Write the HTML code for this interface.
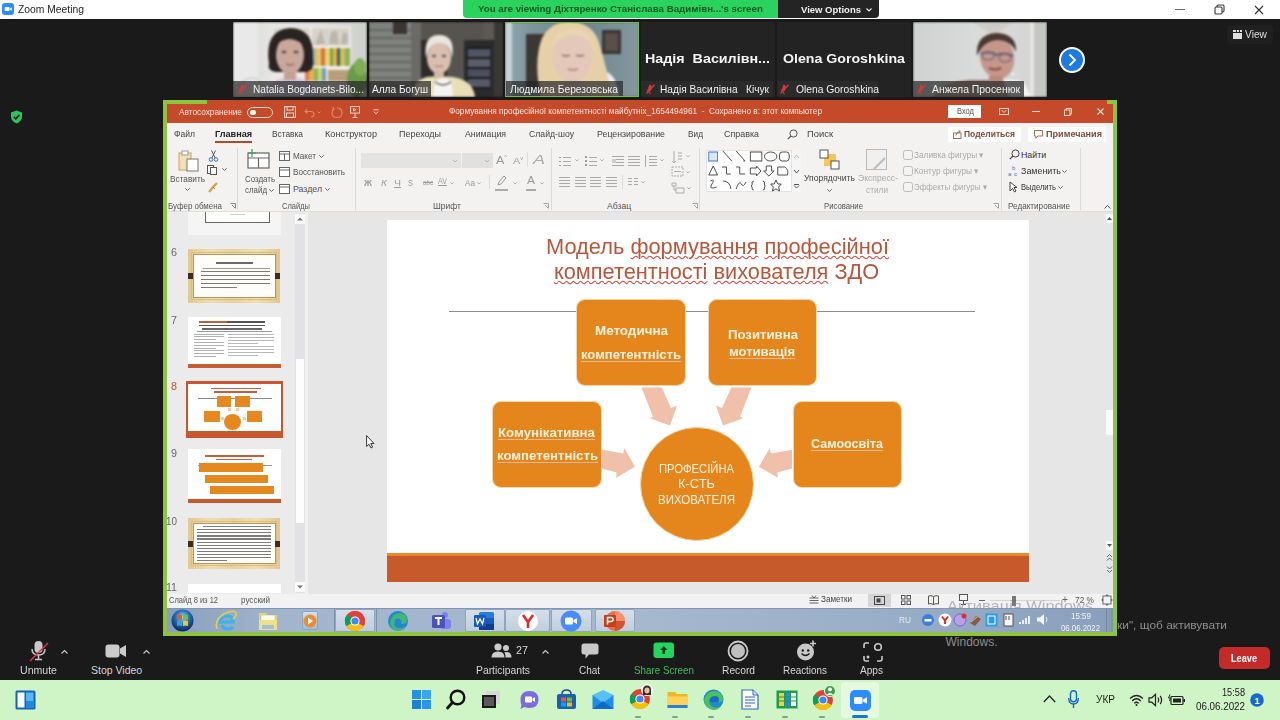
<!DOCTYPE html>
<html><head><meta charset="utf-8">
<style>
*{margin:0;padding:0;box-sizing:border-box}
html,body{width:1280px;height:720px;overflow:hidden;background:#1a1a1a;font-family:"Liberation Sans",sans-serif}
.a{position:absolute}
.t{position:absolute;white-space:nowrap;line-height:1;transform-origin:0 50%}
svg{position:absolute;overflow:visible}
</style></head><body>
<div class="a" style="left:0px;top:0px;width:1280px;height:19px;background:#fff;"></div>
<div class="a" style="left:163px;top:100px;width:954px;height:536px;background:#8ec43f;"></div>
<div class="a" style="left:207px;top:100px;width:900px;height:4px;background:#c44a2a;"></div>
<div class="a" style="left:167px;top:104px;width:946px;height:19px;background:#c44a2a;"></div>
<div class="a" style="left:167px;top:123px;width:946px;height:89px;background:#f3f2f1;"></div>
<div class="a" style="left:167px;top:211px;width:946px;height:1px;background:#dedddc;"></div>
<div class="a" style="left:167px;top:212px;width:141px;height:382px;background:#ebebeb;"></div>
<div class="a" style="left:308px;top:212px;width:805px;height:382px;background:#e6e6e6;"></div>
<div class="a" style="left:167px;top:594px;width:946px;height:14px;background:#f2f2f2;"></div>
<div class="a" style="left:167px;top:608px;width:946px;height:24px;background:linear-gradient(90deg,#889fbd 0%,#a2b5cc 12%,#a6b8ce 50%,#9aaec7 75%,#8a9fbb 100%);"></div>
<div class="a" style="left:0px;top:636px;width:1280px;height:44px;background:#1a1a1a;"></div>
<div class="a" style="left:0px;top:680px;width:1280px;height:40px;background:#cff4c5;"></div>
<div class="a" style="left:2px;top:3px;width:12px;height:12px;background:#2d8cff;border-radius:3px"></div>
<svg style="left:2px;top:3px" width="12" height="12" viewBox="0 0 12 12"><rect x="2.6" y="4" width="4.8" height="4" rx="0.8" fill="#fff"/><path d="M7.8 5.4 L9.8 4.2 V7.8 L7.8 6.6Z" fill="#fff"/></svg>
<div class="t" style="left:18px;top:4.1px;font-size:10.8px;color:#1f1f1f;font-weight:normal;transform:scaleX(0.956);">Zoom Meeting</div>
<div class="a" style="left:1175px;top:9px;width:10px;height:1px;background:#666;"></div>
<svg style="left:1214px;top:4px" width="11" height="11" viewBox="0 0 11 11"><rect x="1" y="3" width="7" height="7" rx="1.2" fill="none" stroke="#333" stroke-width="1.1"/><path d="M3 3 V2.2 Q3 1 4.2 1 H8.8 Q10 1 10 2.2 V6.8 Q10 8 8.8 8 H8" fill="none" stroke="#333" stroke-width="1.1"/></svg>
<svg style="left:1254px;top:5px" width="10" height="10" viewBox="0 0 10 10"><path d="M1 1 L9 9 M9 1 L1 9" stroke="#333" stroke-width="1.1"/></svg>
<div class="a" style="left:463px;top:0px;width:320px;height:17.5px;background:#2ad25e;border-radius:0 0 0 4px"></div>
<div class="t" style="left:478px;top:4.1px;font-size:9.8px;color:#0d5a20;font-weight:bold;transform:scaleX(0.992);">You are viewing Діхтяренко Станіслава Вадимівн...'s screen</div>
<div class="a" style="left:778px;top:0px;width:101px;height:17.5px;background:#242424;border-radius:0 0 4px 0"></div>
<div class="t" style="left:801px;top:4.6px;font-size:9.8px;color:#f0f0f0;font-weight:bold;transform:scaleX(0.969);">View Options</div>
<svg style="left:866px;top:8px" width="6" height="4" viewBox="0 0 6 4"><path d="M0.5 0.5 L3 3 L5.5 0.5" fill="none" stroke="#eee" stroke-width="1.1"/></svg>
<div class="a" style="left:1227px;top:25px;width:46px;height:19px;background:#202020;border-radius:4px"></div>
<div class="a" style="left:1233px;top:30px;width:9px;height:9px;background:#dedede;"></div>
<div class="a" style="left:1233px;top:31.5px;width:9px;height:1px;background:#202020;"></div>
<div class="a" style="left:1235.5px;top:30px;width:1px;height:1.5px;background:#202020;"></div>
<div class="a" style="left:1238.5px;top:30px;width:1px;height:1.5px;background:#202020;"></div>
<div class="t" style="left:1245px;top:29.2px;font-size:10.5px;color:#dcdcdc;font-weight:normal;transform:scaleX(0.974);">View</div>
<svg style="left:10px;top:110px" width="13" height="14" viewBox="0 0 13 14"><path d="M6.5 0.5 L12 2.5 V6.5 Q12 11 6.5 13.5 Q1 11 1 6.5 V2.5Z" fill="#2bc456"/><path d="M3.8 6.8 L5.8 8.8 L9.3 5" fill="none" stroke="#1a1a1a" stroke-width="1.5"/></svg>
<div class="a" style="left:233px;top:22px;width:134px;height:75px;overflow:hidden"><svg style="left:0;top:0;filter:blur(0.9px)" width="134" height="75" viewBox="0 0 134 75"><defs><linearGradient id="bg1" x1="0" x2="1"><stop offset="0" stop-color="#d5d6d4"/><stop offset=".3" stop-color="#e6e6e4"/><stop offset=".7" stop-color="#dcdcd9"/><stop offset="1" stop-color="#cdd0cb"/></linearGradient></defs>
<rect width="134" height="75" fill="url(#bg1)"/>
<rect x="0" y="0" width="25" height="75" fill="#e8e9e8"/>
<rect x="39" y="4" width="79" height="55" fill="#ebe8e1"/>
<rect x="41" y="6" width="36" height="18" fill="#d9d7d2"/><rect x="79" y="6" width="37" height="18" fill="#d6d3cc"/>
<path d="M82 22 L88 8 L92 22 M96 22 L98 10 L104 9 L106 22 M108 22 L110 10 L115 12 L114 22" fill="#bdb6aa"/>
<rect x="39" y="24" width="79" height="2" fill="#f4f2ee"/>
<rect x="79" y="26" width="4" height="18" fill="#9fb4b0"/><rect x="83" y="26" width="5" height="18" fill="#e9c65a"/><rect x="88" y="26" width="4" height="18" fill="#d0744f"/><rect x="92" y="26" width="5" height="18" fill="#e8d46a"/><rect x="97" y="26" width="3" height="18" fill="#7aa14e"/><rect x="100" y="26" width="4" height="18" fill="#ddb64b"/><rect x="104" y="26" width="3" height="18" fill="#4e5a58"/><rect x="107" y="26" width="5" height="18" fill="#c9c35a"/><rect x="112" y="26" width="5" height="18" fill="#8db25a"/>
<rect x="39" y="44" width="79" height="2" fill="#f4f2ee"/>
<rect x="72" y="46" width="4" height="13" fill="#e07a55"/><rect x="76" y="46" width="5" height="13" fill="#e6b24a"/><rect x="81" y="46" width="4" height="13" fill="#86b85e"/><rect x="85" y="46" width="4" height="13" fill="#d9d16a"/><rect x="89" y="46" width="4" height="13" fill="#6aa0c0"/><rect x="95" y="48" width="22" height="11" fill="#b89e78"/>
<ellipse cx="124" cy="58" rx="10" ry="17" fill="#6b9a48"/><ellipse cx="127" cy="45" rx="6" ry="9" fill="#7fae56"/>
<path d="M2 75 Q6 56 20 56 Q32 58 30 75Z" fill="none" stroke="#cfd1d1" stroke-width="1.5"/>
<path d="M30 75 Q36 56 58 55 Q80 56 88 75Z" fill="#cec7dc"/>
<path d="M36 42 Q31 8 57 6 Q81 6 80 36 Q82 48 74 50 L42 50 Q34 48 36 42Z" fill="#2a2321"/>
<ellipse cx="57" cy="33" rx="14" ry="19" fill="#c9a79b"/>
<path d="M43 22 Q47 11 58 11 Q70 11 72 24 Q64 17 56 17 Q48 18 43 22Z" fill="#2a2321"/>
<rect x="51" y="50" width="12" height="8" fill="#c4a194"/><ellipse cx="51" cy="30" rx="2.5" ry="1.3" fill="#5a4440"/><ellipse cx="63" cy="30" rx="2.5" ry="1.3" fill="#5a4440"/><path d="M53 42 Q57 44 61 42" stroke="#9a6a64" stroke-width="1.4" fill="none"/></svg></div>
<div class="a" style="left:233px;top:81px;width:134px;height:16px;background:rgba(35,35,35,0.7);"></div>
<svg style="left:238px;top:84px" width="9" height="11" viewBox="0 0 9 11"><path d="M3.2 0.8 Q5 0.2 5.6 2 L5.2 6 Q4.6 7.6 3 7.2 Q1.6 6.6 2 5Z" fill="#d23a3a"/><path d="M0.5 9.5 L8.5 0.8" stroke="#d23a3a" stroke-width="1.3"/><path d="M1.2 5.5 Q1.5 8.5 4 8.7 M4 8.7 V10.5" fill="none" stroke="#d23a3a" stroke-width="1"/></svg>
<div class="t" style="left:253px;top:83.8px;font-size:10.5px;color:#f2f2f2;font-weight:normal;transform:scaleX(0.960);">Natalia Bogdanets-Bilo...</div>
<div class="a" style="left:369px;top:22px;width:134px;height:75px;overflow:hidden"><svg style="left:0;top:0;filter:blur(0.9px)" width="134" height="75" viewBox="0 0 134 75"><rect width="134" height="75" fill="#5a5955"/>
<rect x="0" y="0" width="42" height="75" fill="#7f817d"/>
<path d="M0 8 H42 M0 16 H42 M0 24 H42 M0 32 H42 M0 40 H42 M0 48 H42 M0 56 H42 M0 64 H42 M0 72 H42" stroke="#5e605c" stroke-width="1.4"/>
<rect x="42" y="0" width="10" height="75" fill="#6b6a66"/>
<rect x="52" y="0" width="62" height="75" fill="#56544f"/>
<rect x="24" y="0" width="14" height="12" fill="#3b3530"/>
<rect x="52" y="18" width="26" height="40" fill="#2f2b27"/>
<rect x="95" y="18" width="30" height="57" fill="#2b2b2c"/>
<path d="M98 26 H122 M98 36 H122 M98 46 H122 M98 56 H122 M98 66 H122" stroke="#1a1a1a" stroke-width="2"/>
<rect x="99" y="27" width="22" height="8" fill="#62667a" opacity=".7"/><rect x="99" y="37" width="22" height="8" fill="#707488" opacity=".7"/><rect x="99" y="47" width="22" height="8" fill="#5a5e70" opacity=".7"/><rect x="99" y="57" width="22" height="8" fill="#6a6e80" opacity=".7"/>
<rect x="125" y="0" width="9" height="75" fill="#3a3835"/>
<path d="M43 75 Q44 58 58 55 L70 54 L84 55 Q104 58 106 75Z" fill="#e6dfb8"/>
<path d="M64 75 Q64 56 74 56 Q84 56 84 75Z" fill="#f4f4f1"/>
<path d="M66 60 Q74 66 82 60" fill="none" stroke="#222" stroke-width="1"/>
<ellipse cx="70" cy="36" rx="12" ry="16" fill="#d8bfb0"/>
<path d="M57 36 Q54 13 70 13 Q87 13 83 36 Q81 21 70 21 Q60 21 57 36Z" fill="#e9e5e0"/>
<rect x="65" y="49" width="10" height="7" fill="#d3b7a6"/><ellipse cx="65" cy="34" rx="2.2" ry="1.2" fill="#6a5a55"/><ellipse cx="75" cy="34" rx="2.2" ry="1.2" fill="#6a5a55"/><path d="M66 44 Q70 45 74 44" stroke="#a07a70" stroke-width="1.2" fill="none"/></svg></div>
<div class="a" style="left:369px;top:81px;width:62px;height:16px;background:rgba(35,35,35,0.7);"></div>
<div class="t" style="left:372px;top:83.8px;font-size:10.5px;color:#f2f2f2;font-weight:normal;transform:scaleX(0.961);">Алла Богуш</div>
<div class="a" style="left:505px;top:22px;width:134px;height:75px;overflow:hidden"><svg style="left:0;top:0;filter:blur(0.9px)" width="134" height="75" viewBox="0 0 134 75"><defs><linearGradient id="bg3" x1="0" x2="1"><stop offset="0" stop-color="#93a9b0"/><stop offset=".2" stop-color="#7d949c"/><stop offset=".6" stop-color="#6f858d"/><stop offset="1" stop-color="#8598a0"/></linearGradient></defs>
<rect width="134" height="75" fill="url(#bg3)"/>
<rect x="0" y="0" width="7" height="75" fill="#c6d4d8"/>
<rect x="21" y="12" width="20" height="56" fill="#3b3735"/>
<rect x="97" y="8" width="19" height="24" fill="#3a3533"/><rect x="100" y="11" width="13" height="18" fill="#5a4f4a"/>
<path d="M96 48 Q112 50 114 75 H96Z" fill="#eef0f4"/>
<path d="M36 75 Q28 40 37 16 Q47 -2 68 0 Q90 2 95 24 Q102 46 107 75Z" fill="#e6d0a8"/>
<ellipse cx="67" cy="34" rx="20" ry="26" fill="#e4c8b9"/>
<path d="M46 30 Q48 7 68 7 Q88 7 90 30 Q84 13 68 13 Q52 13 46 30Z" fill="#e9d6b0"/>
<path d="M48 75 Q56 58 68 58 Q80 58 88 75Z" fill="#dcc4b8"/><path d="M57 33 Q61 35 65 33 M71 33 Q75 35 79 33" stroke="#7a5a50" stroke-width="1.3" fill="none"/><path d="M63 47 Q68 49 73 47" stroke="#b07a74" stroke-width="1.6" fill="none"/></svg></div>
<div class="a" style="left:505px;top:81px;width:118px;height:16px;background:rgba(35,35,35,0.7);"></div>
<div class="t" style="left:510px;top:83.8px;font-size:10.5px;color:#f2f2f2;font-weight:normal;transform:scaleX(0.980);">Людмила Березовська</div>
<div class="a" style="left:505px;top:22px;width:134px;height:75px;border:1px solid #6fbf4a"></div>
<div class="a" style="left:641px;top:22px;width:134px;height:75px;background:#232323;"></div>
<div class="t" style="left:645px;top:52.4px;font-size:13.2px;color:#f4f4f4;font-weight:bold;transform:scaleX(1.084);">Надія&nbsp; Василівн...</div>
<div class="a" style="left:641px;top:81px;width:132px;height:16px;background:#2b2b2b;"></div>
<svg style="left:646px;top:84px" width="9" height="11" viewBox="0 0 9 11"><path d="M3.2 0.8 Q5 0.2 5.6 2 L5.2 6 Q4.6 7.6 3 7.2 Q1.6 6.6 2 5Z" fill="#d23a3a"/><path d="M0.5 9.5 L8.5 0.8" stroke="#d23a3a" stroke-width="1.3"/><path d="M1.2 5.5 Q1.5 8.5 4 8.7 M4 8.7 V10.5" fill="none" stroke="#d23a3a" stroke-width="1"/></svg>
<div class="t" style="left:660px;top:83.8px;font-size:10.5px;color:#f0f0f0;font-weight:normal;transform:scaleX(0.968);">Надія Василівна&nbsp;&nbsp; Кічук</div>
<div class="a" style="left:777px;top:22px;width:134px;height:75px;background:#232323;"></div>
<div class="t" style="left:783px;top:52.4px;font-size:13.2px;color:#f4f4f4;font-weight:bold;transform:scaleX(1.074);">Olena Goroshkina</div>
<div class="a" style="left:777px;top:81px;width:101px;height:16px;background:#2b2b2b;"></div>
<svg style="left:780px;top:84px" width="9" height="11" viewBox="0 0 9 11"><path d="M3.2 0.8 Q5 0.2 5.6 2 L5.2 6 Q4.6 7.6 3 7.2 Q1.6 6.6 2 5Z" fill="#d23a3a"/><path d="M0.5 9.5 L8.5 0.8" stroke="#d23a3a" stroke-width="1.3"/><path d="M1.2 5.5 Q1.5 8.5 4 8.7 M4 8.7 V10.5" fill="none" stroke="#d23a3a" stroke-width="1"/></svg>
<div class="t" style="left:796px;top:83.8px;font-size:10.5px;color:#f0f0f0;font-weight:normal;transform:scaleX(0.981);">Olena Goroshkina</div>
<div class="a" style="left:913px;top:22px;width:134px;height:75px;overflow:hidden"><svg style="left:0;top:0;filter:blur(0.9px)" width="134" height="75" viewBox="0 0 134 75"><defs><linearGradient id="bg6" x1="0" x2="1"><stop offset="0" stop-color="#d0d2d2"/><stop offset=".5" stop-color="#dadbdb"/><stop offset="1" stop-color="#d2d3d1"/></linearGradient></defs>
<rect width="134" height="75" fill="url(#bg6)"/>
<path d="M60 0 L80 14 L100 0Z" fill="#c8c4be" opacity=".6"/>
<rect x="117" y="0" width="4" height="75" fill="#e4e5e4"/><rect x="121" y="0" width="13" height="75" fill="#c5c7c5"/>
<path d="M20 75 Q30 60 56 58 L90 58 Q110 62 116 75Z" fill="#9c7462"/>
<path d="M90 58 Q106 56 112 62 L118 75 H96Z" fill="#f4f4f2"/>
<ellipse cx="84" cy="35" rx="17" ry="22" fill="#c4978a" transform="rotate(-12 84 35)"/>
<path d="M64 34 Q62 12 84 11 Q104 12 103 30 Q98 18 84 18 Q70 19 64 34Z" fill="#4a3932"/>
<path d="M68 32 Q76 28 84 33 Q92 30 100 34" fill="none" stroke="#55556e" stroke-width="1.8"/>
<ellipse cx="75" cy="34" rx="6" ry="4" fill="none" stroke="#6a6a84" stroke-width="1.2"/><ellipse cx="92" cy="36" rx="6" ry="4" fill="none" stroke="#6a6a84" stroke-width="1.2"/>
<path d="M76 46 Q82 49 88 46" fill="none" stroke="#8e4d48" stroke-width="2.2"/>
<rect x="76" y="54" width="14" height="6" fill="#b88a7c"/>
<circle cx="100" cy="52" r="1.5" fill="#eee"/></svg></div>
<div class="a" style="left:913px;top:81px;width:111px;height:16px;background:rgba(60,60,60,0.82);"></div>
<svg style="left:917px;top:84px" width="9" height="11" viewBox="0 0 9 11"><path d="M3.2 0.8 Q5 0.2 5.6 2 L5.2 6 Q4.6 7.6 3 7.2 Q1.6 6.6 2 5Z" fill="#d23a3a"/><path d="M0.5 9.5 L8.5 0.8" stroke="#d23a3a" stroke-width="1.3"/><path d="M1.2 5.5 Q1.5 8.5 4 8.7 M4 8.7 V10.5" fill="none" stroke="#d23a3a" stroke-width="1"/></svg>
<div class="t" style="left:932px;top:83.8px;font-size:10.5px;color:#f0f0f0;font-weight:normal;transform:scaleX(0.991);">Анжела Просенюк</div>
<svg style="left:1058px;top:46px" width="28" height="28" viewBox="0 0 28 28"><circle cx="14" cy="14" r="13" fill="#fff"/><circle cx="14" cy="14" r="11" fill="#1f7ae0"/><path d="M11.5 8.5 L17 14 L11.5 19.5" fill="none" stroke="#fff" stroke-width="1.8"/></svg>
<div class="t" style="left:179px;top:107.6px;font-size:8.8px;color:#fbe3dc;font-weight:normal;transform:scaleX(0.939);">Автосохранение</div>
<div class="a" style="left:247px;top:107px;width:26px;height:10.5px;background:transparent;border:1px solid #f6d7cc;border-radius:6px"></div>
<div class="a" style="left:250px;top:109.5px;width:5.5px;height:5.5px;background:#fff;border-radius:50%"></div>
<svg style="left:284px;top:106px" width="12" height="12" viewBox="0 0 12 12"><rect x="0.6" y="0.6" width="10.8" height="10.8" fill="none" stroke="#f6d7cc" stroke-width="1"/><rect x="3" y="0.6" width="6" height="3.5" fill="none" stroke="#f6d7cc" stroke-width="1"/><rect x="2.5" y="7" width="7" height="4.4" fill="none" stroke="#f6d7cc" stroke-width="1"/></svg>
<svg style="left:304px;top:106px" width="18" height="12" viewBox="0 0 18 12"><path d="M3 3 L1 5.5 L3.5 7.5 M1 5.5 H7 Q10 5.5 10 8.5 Q10 11 7 11" fill="none" stroke="#df8a70" stroke-width="1.1"/><path d="M13.5 5.5 L15 7 L16.5 5.5" fill="none" stroke="#df8a70" stroke-width="0.9"/></svg>
<svg style="left:331px;top:106px" width="12" height="12" viewBox="0 0 12 12"><path d="M6 2 Q11 2 11 7 Q11 11.5 6 11.5 Q1 11.5 1 7 Q1 4 3 3 M1.5 1 L3 3 L1 4.5" fill="none" stroke="#df8a70" stroke-width="1.1"/></svg>
<svg style="left:350px;top:106px" width="10" height="12" viewBox="0 0 10 12"><rect x="0.6" y="0.6" width="8.8" height="6.5" fill="none" stroke="#f6d7cc" stroke-width="1"/><path d="M5 7 V11.5 M2.5 11.5 H7.5 M3.5 2.5 V5 L6 3.8Z" stroke="#f6d7cc" fill="none" stroke-width="1"/></svg>
<svg style="left:373px;top:109px" width="6" height="6" viewBox="0 0 6 6"><path d="M0.5 0.8 H5.5 M0.8 2.6 L3 4.8 L5.2 2.6" fill="none" stroke="#f6d7cc" stroke-width="1"/></svg>
<div class="t" style="left:449px;top:107.0px;font-size:9px;color:#fbe3dc;font-weight:normal;transform:scaleX(0.916);">Формування професійної компетентності майбутніх_1654494961&nbsp; -&nbsp; Сохранено в: этот компьютер</div>
<div class="a" style="left:948px;top:105px;width:33px;height:13px;background:#fdfdfd;"></div>
<div class="t" style="left:957px;top:107.2px;font-size:8.6px;color:#555;font-weight:normal;transform:scaleX(0.874);">Вход</div>
<svg style="left:999px;top:108px" width="10" height="7" viewBox="0 0 10 7"><rect x="0.5" y="0.5" width="9" height="6" fill="none" stroke="#f6d7cc" stroke-width="1"/><path d="M2.5 2 L5 4.5 L7.5 2" fill="none" stroke="#f6d7cc" stroke-width="1"/></svg>
<div class="a" style="left:1032px;top:111px;width:8px;height:1px;background:#f6d7cc;"></div>
<svg style="left:1064px;top:107.5px" width="8" height="8" viewBox="0 0 8 8"><rect x="0.5" y="2" width="5.5" height="5.5" fill="none" stroke="#f6d7cc" stroke-width="1"/><path d="M2 2 V0.5 H7.5 V6 H6" fill="none" stroke="#f6d7cc" stroke-width="1"/></svg>
<svg style="left:1097px;top:107.5px" width="7" height="7" viewBox="0 0 7 7"><path d="M0.5 0.5 L6.5 6.5 M6.5 0.5 L0.5 6.5" stroke="#fbe3dc" stroke-width="1.1"/></svg>
<div class="t" style="left:174px;top:130.0px;font-size:9px;color:#444;font-weight:normal;transform:scaleX(0.948);">Файл</div>
<div class="t" style="left:215px;top:130.0px;font-size:9px;color:#222;font-weight:bold;transform:scaleX(1.011);">Главная</div>
<div class="a" style="left:215px;top:141px;width:37px;height:1.6px;background:#b5472a;"></div>
<div class="t" style="left:272px;top:130.0px;font-size:9px;color:#444;font-weight:normal;transform:scaleX(0.927);">Вставка</div>
<div class="t" style="left:325px;top:130.0px;font-size:9px;color:#444;font-weight:normal;transform:scaleX(1.013);">Конструктор</div>
<div class="t" style="left:399px;top:130.0px;font-size:9px;color:#444;font-weight:normal;transform:scaleX(0.995);">Переходы</div>
<div class="t" style="left:465px;top:130.0px;font-size:9px;color:#444;font-weight:normal;transform:scaleX(0.970);">Анимация</div>
<div class="t" style="left:529px;top:130.0px;font-size:9px;color:#444;font-weight:normal;transform:scaleX(0.964);">Слайд-шоу</div>
<div class="t" style="left:597px;top:130.0px;font-size:9px;color:#444;font-weight:normal;transform:scaleX(0.978);">Рецензирование</div>
<div class="t" style="left:688px;top:130.0px;font-size:9px;color:#444;font-weight:normal;transform:scaleX(0.920);">Вид</div>
<div class="t" style="left:724px;top:130.0px;font-size:9px;color:#444;font-weight:normal;transform:scaleX(0.991);">Справка</div>
<svg style="left:787px;top:129px" width="11" height="11" viewBox="0 0 11 11"><circle cx="6.5" cy="4.5" r="3.6" fill="none" stroke="#555" stroke-width="1"/><path d="M4 7 L0.8 10.2" stroke="#555" stroke-width="1.2"/></svg>
<div class="t" style="left:807px;top:130.0px;font-size:9px;color:#444;font-weight:normal;transform:scaleX(1.042);">Поиск</div>
<div class="a" style="left:948px;top:127px;width:73px;height:15px;background:#fefefe;"></div>
<svg style="left:953px;top:130px" width="9" height="9" viewBox="0 0 9 9"><rect x="0.5" y="3" width="7.5" height="5.5" fill="none" stroke="#9a7060" stroke-width="1"/><path d="M3 5.5 Q3 2 7 1.5 M5.5 0.3 L7.3 1.5 L5.8 3" fill="none" stroke="#9a7060" stroke-width="1"/></svg>
<div class="t" style="left:964px;top:130.1px;font-size:8.8px;color:#7e4a3c;font-weight:bold;transform:scaleX(0.966);">Поделиться</div>
<div class="a" style="left:1028px;top:127px;width:78px;height:15px;background:#fefefe;"></div>
<svg style="left:1034px;top:130px" width="9" height="9" viewBox="0 0 9 9"><path d="M0.5 0.5 H8.5 V6 H4 L1.8 8.3 V6 H0.5Z" fill="none" stroke="#9a7060" stroke-width="1"/></svg>
<div class="t" style="left:1046px;top:130.1px;font-size:8.8px;color:#7e4a3c;font-weight:bold;transform:scaleX(1.034);">Примечания</div>
<div class="a" style="left:237px;top:148px;width:1px;height:62px;background:#dad9d8;"></div>
<div class="a" style="left:355px;top:148px;width:1px;height:62px;background:#dad9d8;"></div>
<div class="a" style="left:551px;top:148px;width:1px;height:62px;background:#dad9d8;"></div>
<div class="a" style="left:699px;top:148px;width:1px;height:62px;background:#dad9d8;"></div>
<div class="a" style="left:1001px;top:148px;width:1px;height:62px;background:#dad9d8;"></div>
<div class="a" style="left:1080px;top:148px;width:1px;height:62px;background:#dad9d8;"></div>
<svg style="left:178px;top:150px" width="22" height="22" viewBox="0 0 22 22"><rect x="1" y="3" width="12" height="17" fill="#f3e1b5" stroke="#c9a15d" stroke-width="1"/><rect x="4" y="1" width="6" height="4" fill="#fff" stroke="#999" stroke-width="1"/><rect x="9" y="9" width="11" height="12" fill="#fff" stroke="#777" stroke-width="1"/></svg>
<div class="t" style="left:170px;top:174.6px;font-size:8.8px;color:#555;font-weight:normal;transform:scaleX(0.938);">Вставить</div>
<svg style="left:185px;top:188px" width="5" height="3" viewBox="0 0 5 3"><path d="M0.3 0.3 L2.5 2.5 L4.7 0.3" fill="none" stroke="#666" stroke-width="1"/></svg>
<svg style="left:209px;top:150px" width="9" height="12" viewBox="0 0 9 12"><circle cx="2" cy="9.5" r="1.8" fill="none" stroke="#3a6fb5" stroke-width="1"/><circle cx="7" cy="9.5" r="1.8" fill="none" stroke="#3a6fb5" stroke-width="1"/><path d="M2.8 8 L6.5 0.5 M6.2 8 L2.5 0.5" stroke="#555" stroke-width="1"/></svg>
<svg style="left:207px;top:165px" width="12" height="10" viewBox="0 0 12 10"><rect x="0.5" y="0.5" width="6" height="8" fill="#fff" stroke="#555" stroke-width="1"/><rect x="3.5" y="2.5" width="6" height="7" fill="#fff" stroke="#555" stroke-width="1"/></svg>
<svg style="left:222px;top:168px" width="5" height="3" viewBox="0 0 5 3"><path d="M0.3 0.3 L2.5 2.5 L4.7 0.3" fill="none" stroke="#666" stroke-width="1"/></svg>
<svg style="left:208px;top:182px" width="11" height="11" viewBox="0 0 11 11"><path d="M1 10 L5 5 L9 1" stroke="#d6a24a" stroke-width="2.4"/><path d="M5 5 L7 7" stroke="#777" stroke-width="1"/></svg>
<div class="t" style="left:168px;top:201.7px;font-size:8.6px;color:#555;font-weight:normal;transform:scaleX(0.925);">Буфер обмена</div>
<svg style="left:230px;top:203px" width="6" height="6" viewBox="0 0 6 6"><path d="M0.5 0.5 H5.5 V5.5 M2 2 L5 5" fill="none" stroke="#777" stroke-width="0.9"/></svg>
<svg style="left:247px;top:148px" width="24" height="22" viewBox="0 0 24 22"><rect x="1" y="5" width="21" height="15" fill="#fff" stroke="#666" stroke-width="1.2"/><path d="M1 10 H22 M11.5 10 V20" stroke="#666" stroke-width="1.2"/><path d="M5 1 V9 M1 5 H9" stroke="#3a9b55" stroke-width="1.2"/></svg>
<div class="t" style="left:245px;top:174.6px;font-size:8.8px;color:#555;font-weight:normal;transform:scaleX(0.897);">Создать</div>
<div class="t" style="left:245px;top:185.6px;font-size:8.8px;color:#555;font-weight:normal;transform:scaleX(0.899);">слайд</div>
<svg style="left:269px;top:189px" width="5" height="3" viewBox="0 0 5 3"><path d="M0.3 0.3 L2.5 2.5 L4.7 0.3" fill="none" stroke="#666" stroke-width="1"/></svg>
<svg style="left:279px;top:151px" width="11" height="10" viewBox="0 0 11 10"><rect x="0.5" y="0.5" width="10" height="9" fill="#fff" stroke="#666" stroke-width="1"/><path d="M0.5 3 H10.5" stroke="#666" stroke-width="1"/><path d="M5.5 3 V9.5" stroke="#666" stroke-width="1"/></svg>
<div class="t" style="left:293px;top:151.6px;font-size:8.8px;color:#555;font-weight:normal;transform:scaleX(0.923);">Макет</div>
<svg style="left:319px;top:155px" width="5" height="3" viewBox="0 0 5 3"><path d="M0.3 0.3 L2.5 2.5 L4.7 0.3" fill="none" stroke="#666" stroke-width="1"/></svg>
<svg style="left:279px;top:167px" width="11" height="10" viewBox="0 0 11 10"><rect x="0.5" y="0.5" width="10" height="9" fill="#fff" stroke="#666" stroke-width="1"/><path d="M0.5 3 H10.5" stroke="#666" stroke-width="1"/></svg>
<div class="t" style="left:293px;top:167.6px;font-size:8.8px;color:#555;font-weight:normal;transform:scaleX(0.923);">Восстановить</div>
<svg style="left:279px;top:184px" width="11" height="10" viewBox="0 0 11 10"><rect x="0.5" y="0.5" width="10" height="9" fill="#fff" stroke="#666" stroke-width="1"/><path d="M0.5 3 H10.5" stroke="#666" stroke-width="1"/></svg>
<div class="t" style="left:293px;top:184.6px;font-size:8.8px;color:#555;font-weight:normal;">Раздел</div>
<svg style="left:325px;top:188px" width="5" height="3" viewBox="0 0 5 3"><path d="M0.3 0.3 L2.5 2.5 L4.7 0.3" fill="none" stroke="#666" stroke-width="1"/></svg>
<div class="t" style="left:282px;top:201.7px;font-size:8.6px;color:#555;font-weight:normal;transform:scaleX(0.875);">Слайды</div>
<div class="a" style="left:361px;top:153px;width:100px;height:15px;background:#e3e3e3;"></div>
<div class="a" style="left:461px;top:153px;width:32px;height:15px;background:#e0e0e0;border-left:1px solid #f0f0f0"></div>
<svg style="left:453px;top:160px" width="4" height="2" viewBox="0 0 4 2"><path d="M0 0 L2 2 L4 0" fill="none" stroke="#aaa" stroke-width="0.8"/></svg>
<svg style="left:485px;top:160px" width="4" height="2" viewBox="0 0 4 2"><path d="M0 0 L2 2 L4 0" fill="none" stroke="#aaa" stroke-width="0.8"/></svg>
<div class="t" style="left:496px;top:154.5px;font-size:11px;color:#999;font-weight:normal;transform:scaleX(1.134);">A<sup style="font-size:5px">^</sup></div>
<div class="t" style="left:513px;top:156.2px;font-size:9.5px;color:#999;font-weight:normal;transform:scaleX(1.131);">A<sup style="font-size:5px">v</sup></div>
<div class="a" style="left:527px;top:152px;width:1px;height:15px;background:#ddd;"></div>
<div class="t" style="left:533px;top:154.0px;font-size:12px;color:#aaa;font-weight:normal;transform:scaleX(1.497);"><i>A</i></div>
<div class="t" style="left:364px;top:177.8px;font-size:9.5px;color:#9a9a9a;font-weight:bold;transform:scaleX(0.931);">Ж</div>
<div class="t" style="left:381px;top:177.8px;font-size:9.5px;color:#9a9a9a;font-weight:normal;transform:scaleX(1.070);"><i>К</i></div>
<div class="t" style="left:394px;top:177.8px;font-size:9.5px;color:#9a9a9a;font-weight:normal;transform:scaleX(1.103);"><u>Ч</u></div>
<div class="t" style="left:408px;top:177.8px;font-size:9.5px;color:#9a9a9a;font-weight:normal;transform:scaleX(0.788);">S</div>
<div class="t" style="left:423px;top:178.5px;font-size:8px;color:#9a9a9a;font-weight:normal;transform:scaleX(0.775);"><s>abc</s></div>
<div class="t" style="left:438px;top:176.8px;font-size:8.5px;color:#9a9a9a;font-weight:normal;transform:scaleX(0.840);"><u>AV</u></div>
<div class="t" style="left:465px;top:177.8px;font-size:9.5px;color:#9a9a9a;font-weight:normal;transform:scaleX(0.860);">Aa</div>
<svg style="left:450px;top:182px" width="4" height="2.5" viewBox="0 0 4 2.5"><path d="M0.3 0.3 L2 2 L3.7 0.3" fill="none" stroke="#aaa" stroke-width="0.9"/></svg>
<svg style="left:477px;top:182px" width="4" height="2.5" viewBox="0 0 4 2.5"><path d="M0.3 0.3 L2 2 L3.7 0.3" fill="none" stroke="#aaa" stroke-width="0.9"/></svg>
<svg style="left:513px;top:182px" width="4" height="2.5" viewBox="0 0 4 2.5"><path d="M0.3 0.3 L2 2 L3.7 0.3" fill="none" stroke="#aaa" stroke-width="0.9"/></svg>
<svg style="left:540px;top:182px" width="4" height="2.5" viewBox="0 0 4 2.5"><path d="M0.3 0.3 L2 2 L3.7 0.3" fill="none" stroke="#aaa" stroke-width="0.9"/></svg>
<div class="a" style="left:489px;top:175px;width:1px;height:14px;background:#ddd;"></div>
<div class="a" style="left:495px;top:189px;width:13px;height:2px;background:#aaa;"></div>
<svg style="left:497px;top:175px" width="10" height="12" viewBox="0 0 10 12"><path d="M1 10 L2 7 L7 1 L9 3 L4 9Z" fill="none" stroke="#999" stroke-width="1"/></svg>
<div class="t" style="left:527px;top:176.0px;font-size:10px;color:#9a9a9a;font-weight:normal;transform:scaleX(1.199);">A</div>
<div class="a" style="left:526px;top:189px;width:10px;height:2px;background:#aaa;"></div>
<div class="t" style="left:433px;top:201.7px;font-size:8.6px;color:#555;font-weight:normal;transform:scaleX(0.990);">Шрифт</div>
<svg style="left:543px;top:203px" width="6" height="6" viewBox="0 0 6 6"><path d="M0.5 0.5 H5.5 V5.5 M2 2 L5 5" fill="none" stroke="#999" stroke-width="0.9"/></svg>
<div class="a" style="left:559px;top:156.5px;width:1.6px;height:1.6px;background:#999;"></div>
<div class="a" style="left:563px;top:157px;width:8px;height:1px;background:#aaa;"></div>
<div class="a" style="left:559px;top:160.5px;width:1.6px;height:1.6px;background:#999;"></div>
<div class="a" style="left:563px;top:161px;width:8px;height:1px;background:#aaa;"></div>
<div class="a" style="left:559px;top:164.5px;width:1.6px;height:1.6px;background:#999;"></div>
<div class="a" style="left:563px;top:165px;width:8px;height:1px;background:#aaa;"></div>
<svg style="left:575px;top:159px" width="4" height="2.5" viewBox="0 0 4 2.5"><path d="M0.3 0.3 L2 2 L3.7 0.3" fill="none" stroke="#aaa" stroke-width="0.9"/></svg>
<div class="a" style="left:585px;top:156px;width:2px;height:2px;background:#999;"></div>
<div class="a" style="left:589px;top:157px;width:8px;height:1px;background:#aaa;"></div>
<div class="a" style="left:585px;top:160px;width:2px;height:2px;background:#999;"></div>
<div class="a" style="left:589px;top:161px;width:8px;height:1px;background:#aaa;"></div>
<div class="a" style="left:585px;top:164px;width:2px;height:2px;background:#999;"></div>
<div class="a" style="left:589px;top:165px;width:8px;height:1px;background:#aaa;"></div>
<svg style="left:600px;top:159px" width="4" height="2.5" viewBox="0 0 4 2.5"><path d="M0.3 0.3 L2 2 L3.7 0.3" fill="none" stroke="#aaa" stroke-width="0.9"/></svg>
<div class="a" style="left:612px;top:156px;width:12px;height:1px;background:#aaa;"></div><div class="a" style="left:612px;top:159px;width:12px;height:1px;background:#aaa;"></div><div class="a" style="left:612px;top:162px;width:12px;height:1px;background:#aaa;"></div><div class="a" style="left:612px;top:165px;width:12px;height:1px;background:#aaa;"></div>
<div class="a" style="left:612px;top:159px;width:4px;height:4px;background:#ccc;"></div>
<div class="a" style="left:628px;top:156px;width:12px;height:1px;background:#aaa;"></div><div class="a" style="left:628px;top:159px;width:12px;height:1px;background:#aaa;"></div><div class="a" style="left:628px;top:162px;width:12px;height:1px;background:#aaa;"></div><div class="a" style="left:628px;top:165px;width:12px;height:1px;background:#aaa;"></div>
<div class="a" style="left:649px;top:156px;width:8px;height:1px;background:#aaa;"></div><div class="a" style="left:649px;top:159px;width:8px;height:1px;background:#aaa;"></div><div class="a" style="left:649px;top:162px;width:8px;height:1px;background:#aaa;"></div><div class="a" style="left:649px;top:165px;width:8px;height:1px;background:#aaa;"></div>
<div class="a" style="left:645px;top:155px;width:1px;height:12px;background:#aaa;"></div>
<svg style="left:660px;top:159px" width="4" height="2.5" viewBox="0 0 4 2.5"><path d="M0.3 0.3 L2 2 L3.7 0.3" fill="none" stroke="#aaa" stroke-width="0.9"/></svg>
<div class="a" style="left:559px;top:176.5px;width:11px;height:1px;background:#aaa;"></div><div class="a" style="left:559px;top:179.5px;width:11px;height:1px;background:#aaa;"></div><div class="a" style="left:559px;top:182.5px;width:11px;height:1px;background:#aaa;"></div><div class="a" style="left:559px;top:185.5px;width:11px;height:1px;background:#aaa;"></div>
<div class="a" style="left:575px;top:176.5px;width:11px;height:1px;background:#aaa;"></div><div class="a" style="left:575px;top:179.5px;width:11px;height:1px;background:#aaa;"></div><div class="a" style="left:575px;top:182.5px;width:11px;height:1px;background:#aaa;"></div><div class="a" style="left:575px;top:185.5px;width:11px;height:1px;background:#aaa;"></div>
<div class="a" style="left:590px;top:176.5px;width:11px;height:1px;background:#aaa;"></div><div class="a" style="left:590px;top:179.5px;width:11px;height:1px;background:#aaa;"></div><div class="a" style="left:590px;top:182.5px;width:11px;height:1px;background:#aaa;"></div><div class="a" style="left:590px;top:185.5px;width:11px;height:1px;background:#aaa;"></div>
<div class="a" style="left:606px;top:176.5px;width:11px;height:1px;background:#aaa;"></div><div class="a" style="left:606px;top:179.5px;width:11px;height:1px;background:#aaa;"></div><div class="a" style="left:606px;top:182.5px;width:11px;height:1px;background:#aaa;"></div><div class="a" style="left:606px;top:185.5px;width:11px;height:1px;background:#aaa;"></div>
<div class="a" style="left:622px;top:175px;width:1px;height:14px;background:#ddd;"></div>
<div class="a" style="left:628px;top:178px;width:4px;height:1px;background:#aaa;"></div><div class="a" style="left:628px;top:181px;width:4px;height:1px;background:#aaa;"></div><div class="a" style="left:628px;top:184px;width:4px;height:1px;background:#aaa;"></div>
<div class="a" style="left:634px;top:178px;width:4px;height:1px;background:#aaa;"></div><div class="a" style="left:634px;top:181px;width:4px;height:1px;background:#aaa;"></div><div class="a" style="left:634px;top:184px;width:4px;height:1px;background:#aaa;"></div>
<svg style="left:641px;top:181px" width="4" height="2.5" viewBox="0 0 4 2.5"><path d="M0.3 0.3 L2 2 L3.7 0.3" fill="none" stroke="#aaa" stroke-width="0.9"/></svg>
<svg style="left:671px;top:150px" width="12" height="14" viewBox="0 0 12 14"><path d="M3 1 V13 M1 11 L3 13 L5 11 M7 3 H11 M7 6 H11 M7 9 H11" fill="none" stroke="#aaa" stroke-width="1"/></svg>
<svg style="left:686px;top:155px" width="4" height="2.5" viewBox="0 0 4 2.5"><path d="M0.3 0.3 L2 2 L3.7 0.3" fill="none" stroke="#aaa" stroke-width="0.9"/></svg>
<svg style="left:671px;top:166px" width="13" height="11" viewBox="0 0 13 11"><rect x="1" y="1" width="11" height="9" fill="none" stroke="#aaa" stroke-width="1" stroke-dasharray="2 1"/><path d="M3 5.5 H10" stroke="#aaa"/></svg>
<svg style="left:686px;top:171px" width="4" height="2.5" viewBox="0 0 4 2.5"><path d="M0.3 0.3 L2 2 L3.7 0.3" fill="none" stroke="#aaa" stroke-width="0.9"/></svg>
<svg style="left:671px;top:182px" width="14" height="12" viewBox="0 0 14 12"><path d="M1 1 H5 V4 H1Z M5 6 H13 V11 H5Z M3 4 V8 H5" fill="none" stroke="#aaa" stroke-width="1"/></svg>
<svg style="left:687px;top:187px" width="4" height="2.5" viewBox="0 0 4 2.5"><path d="M0.3 0.3 L2 2 L3.7 0.3" fill="none" stroke="#aaa" stroke-width="0.9"/></svg>
<div class="t" style="left:607px;top:201.7px;font-size:8.6px;color:#555;font-weight:normal;">Абзац</div>
<svg style="left:692px;top:203px" width="6" height="6" viewBox="0 0 6 6"><path d="M0.5 0.5 H5.5 V5.5 M2 2 L5 5" fill="none" stroke="#999" stroke-width="0.9"/></svg>
<div class="a" style="left:706px;top:150px;width:95px;height:42px;background:#fff;border:1px solid #e3e3e3"></div>
<div class="a" style="left:791px;top:150px;width:10px;height:42px;background:#f5f5f5;border-left:1px solid #e3e3e3"></div>
<svg style="left:707px;top:150px" width="84" height="42" viewBox="0 0 95 42" preserveAspectRatio="none"><rect x="2" y="2" width="10" height="9" fill="#dbe8f5" stroke="#3a76c2" stroke-width="1"/><path d="M18 1 L28 11 M33 1 L43 11 L41 11" stroke="#444" fill="none" stroke-width="1"/><rect x="49" y="2" width="13" height="9" fill="none" stroke="#444"/><ellipse cx="72" cy="6.5" rx="7" ry="4.5" fill="none" stroke="#444"/><rect x="82" y="2" width="11" height="9" rx="3" fill="none" stroke="#444"/><path d="M2 25 L7 16 L12 25Z M17 17 H22 V24 H27 M33 17 H37 V24 H43 M49 18 H56 V16 L61 21 L56 26 V24 H49Z M67 16 H73 V21 H76 L70 26 L64 21 H67Z M80 17 H88 Q93 20 91 25 H80Z" fill="none" stroke="#444" stroke-width="1"/><path d="M4 31 Q10 28 5 35 Q2 40 11 37 M18 31 Q26 31 27 39 M33 39 Q36 30 39 34 Q41 38 44 32 M53 31 Q50 31 51 35 Q49 36 51 37 Q50 40 53 40 M63 31 Q66 31 65 35 Q67 36 65 37 Q66 40 63 40 M78 30 L80 34 L84 34 L81 37 L82 41 L78 39 L74 41 L75 37 L72 34 L76 34Z" fill="none" stroke="#444" stroke-width="1"/></svg>
<svg style="left:793.5px;top:155px" width="5" height="3" viewBox="0 0 5 3"><path d="M0 3 L2.5 0 L5 3" fill="none" stroke="#aaa" stroke-width="0.8"/></svg>
<svg style="left:793.5px;top:170px" width="5" height="3" viewBox="0 0 5 3"><path d="M0 0 L2.5 3 L5 0" fill="none" stroke="#444" stroke-width="0.9"/></svg>
<svg style="left:793.5px;top:184px" width="5" height="4" viewBox="0 0 5 4"><path d="M0 0.5 H5 M0 1.5 L2.5 4 L5 1.5" fill="none" stroke="#444" stroke-width="0.9"/></svg>
<svg style="left:819px;top:149px" width="22" height="21" viewBox="0 0 22 21"><rect x="5" y="5" width="12" height="12" fill="#f7c55a"/><rect x="1" y="1" width="8" height="8" fill="#fff" stroke="#555" stroke-width="1"/><rect x="12" y="12" width="8" height="8" fill="#fff" stroke="#555" stroke-width="1"/></svg>
<div class="t" style="left:804px;top:173.6px;font-size:8.8px;color:#444;font-weight:normal;transform:scaleX(0.974);">Упорядочить</div>
<svg style="left:827px;top:189px" width="5" height="3" viewBox="0 0 5 3"><path d="M0.3 0.3 L2.5 2.5 L4.7 0.3" fill="none" stroke="#666" stroke-width="1"/></svg>
<svg style="left:866px;top:149px" width="24" height="24" viewBox="0 0 24 24"><rect x="0.5" y="0.5" width="20" height="20" fill="#f0f0f0" stroke="#bbb"/><path d="M8 20 L19 9" stroke="#bbb" stroke-width="2"/></svg>
<div class="t" style="left:858px;top:173.6px;font-size:8.8px;color:#aaa;font-weight:normal;transform:scaleX(0.977);">Экспресс-</div>
<div class="t" style="left:866px;top:185.6px;font-size:8.8px;color:#aaa;font-weight:normal;transform:scaleX(0.941);">стили</div>
<svg style="left:903px;top:150px" width="10" height="10" viewBox="0 0 10 10"><rect x="0.5" y="0.5" width="9" height="9" rx="2" fill="none" stroke="#bbb"/></svg>
<div class="t" style="left:914px;top:150.5px;font-size:9px;color:#aaa;font-weight:normal;transform:scaleX(0.918);">Заливка фигуры ▾</div>
<svg style="left:903px;top:166px" width="10" height="10" viewBox="0 0 10 10"><rect x="0.5" y="0.5" width="9" height="9" rx="2" fill="none" stroke="#bbb"/></svg>
<div class="t" style="left:914px;top:166.5px;font-size:9px;color:#aaa;font-weight:normal;transform:scaleX(0.923);">Контур фигуры ▾</div>
<svg style="left:903px;top:182px" width="10" height="10" viewBox="0 0 10 10"><rect x="0.5" y="0.5" width="9" height="9" rx="2" fill="none" stroke="#bbb"/></svg>
<div class="t" style="left:914px;top:182.5px;font-size:9px;color:#aaa;font-weight:normal;transform:scaleX(0.885);">Эффекты фигуры ▾</div>
<div class="t" style="left:824px;top:201.7px;font-size:8.6px;color:#555;font-weight:normal;transform:scaleX(0.901);">Рисование</div>
<svg style="left:993px;top:203px" width="6" height="6" viewBox="0 0 6 6"><path d="M0.5 0.5 H5.5 V5.5 M2 2 L5 5" fill="none" stroke="#999" stroke-width="0.9"/></svg>
<svg style="left:1009px;top:149px" width="11" height="11" viewBox="0 0 11 11"><circle cx="6.5" cy="4.5" r="3.6" fill="none" stroke="#444" stroke-width="1"/><path d="M4 7 L0.8 10.2" stroke="#444" stroke-width="1.2"/></svg>
<div class="t" style="left:1021px;top:150.6px;font-size:8.8px;color:#333;font-weight:normal;">Найти</div>
<svg style="left:1008px;top:165px" width="12" height="12" viewBox="0 0 12 12"><text x="4" y="5" font-size="6" fill="#3a76c2" font-family="Liberation Sans">b</text><text x="0" y="11" font-size="6" fill="#3a76c2" font-family="Liberation Sans">a</text><text x="6" y="11" font-size="6" fill="#3a76c2" font-family="Liberation Sans">c</text></svg>
<div class="t" style="left:1021px;top:166.6px;font-size:8.8px;color:#333;font-weight:normal;transform:scaleX(1.012);">Заменить</div>
<svg style="left:1062px;top:170px" width="5" height="3" viewBox="0 0 5 3"><path d="M0.3 0.3 L2.5 2.5 L4.7 0.3" fill="none" stroke="#666" stroke-width="1"/></svg>
<svg style="left:1009px;top:181px" width="9" height="12" viewBox="0 0 9 12"><path d="M1 1 V10 L3.5 7.5 L5.5 11 L7 10 L5 6.5 H8Z" fill="#fff" stroke="#444" stroke-width="1"/></svg>
<div class="t" style="left:1021px;top:182.6px;font-size:8.8px;color:#333;font-weight:normal;transform:scaleX(0.862);">Выделить</div>
<svg style="left:1058px;top:186px" width="5" height="3" viewBox="0 0 5 3"><path d="M0.3 0.3 L2.5 2.5 L4.7 0.3" fill="none" stroke="#666" stroke-width="1"/></svg>
<div class="t" style="left:1008px;top:201.7px;font-size:8.6px;color:#555;font-weight:normal;transform:scaleX(0.947);">Редактирование</div>
<svg style="left:1104px;top:205px" width="7" height="4" viewBox="0 0 7 4"><path d="M0.5 3.5 L3.5 0.5 L6.5 3.5" fill="none" stroke="#555" stroke-width="1"/></svg>
<div class="a" style="left:188px;top:212px;width:93px;height:23px;background:#f5f5f5;"></div>
<div class="a" style="left:205px;top:212px;width:65px;height:11px;background:#fff;border:1px solid #666;border-top:none"></div>
<div class="a" style="left:230px;top:214px;width:15px;height:1px;background:#ccc;"></div>
<div class="t" style="left:171px;top:246.8px;font-size:10.5px;color:#666;font-weight:normal;transform:scaleX(1.027);">6</div>
<div class="a" style="left:188px;top:249px;width:92px;height:54px;background:linear-gradient(90deg,#e3c891,#f0dcae 25%,#e8d09b 50%,#f2dfb0 75%,#e1c68f);"></div>
<div class="a" style="left:191px;top:252px;width:86px;height:48px;background:transparent;border:1px solid #d9bd82"></div>
<div class="a" style="left:193px;top:254px;width:82.5px;height:44px;background:#fefdf9;border:1px solid #b9975a"></div>
<div class="a" style="left:188px;top:273.0px;width:5px;height:6px;background:#3e2c22;"></div>
<div class="a" style="left:275px;top:273.0px;width:5px;height:6px;background:#3e2c22;"></div>
<div class="a" style="left:216px;top:262px;width:37px;height:1.5px;background:#6a6a6a;"></div>
<div class="a" style="left:203px;top:267.5px;width:67px;height:1px;background:#9a9a9a;"></div>
<div class="a" style="left:201px;top:270.5px;width:69px;height:1.6px;background:#7a7a7a;"></div>
<div class="a" style="left:201px;top:274.5px;width:69px;height:1.6px;background:#7a7a7a;"></div>
<div class="a" style="left:201px;top:278.5px;width:69px;height:1.6px;background:#7a7a7a;"></div>
<div class="a" style="left:201px;top:282.5px;width:69px;height:1.6px;background:#7a7a7a;"></div>
<div class="a" style="left:201px;top:286.5px;width:36px;height:1.6px;background:#7a7a7a;"></div>
<div class="t" style="left:171px;top:314.8px;font-size:10.5px;color:#666;font-weight:normal;transform:scaleX(1.027);">7</div>
<div class="a" style="left:188px;top:317px;width:93px;height:51px;background:#fff;"></div>
<div class="a" style="left:199px;top:321px;width:28px;height:1.8px;background:#b4643c;"></div>
<div class="a" style="left:227px;top:321px;width:38px;height:1.8px;background:#555;"></div>
<div class="a" style="left:199px;top:324.5px;width:66px;height:1.8px;background:#555;"></div>
<div class="a" style="left:202px;top:328px;width:60px;height:1.6px;background:#666;"></div>
<div class="a" style="left:197px;top:330.5px;width:75px;height:1px;background:#999;"></div>
<div class="a" style="left:194px;top:333.5px;width:30px;height:1px;background:#b0b0b0;"></div>
<div class="a" style="left:194px;top:336.3px;width:30px;height:1px;background:#b0b0b0;"></div>
<div class="a" style="left:194px;top:339.1px;width:22px;height:1px;background:#b0b0b0;"></div>
<div class="a" style="left:194px;top:341.9px;width:30px;height:1px;background:#b0b0b0;"></div>
<div class="a" style="left:194px;top:344.7px;width:30px;height:1px;background:#b0b0b0;"></div>
<div class="a" style="left:194px;top:347.5px;width:22px;height:1px;background:#b0b0b0;"></div>
<div class="a" style="left:194px;top:350.3px;width:30px;height:1px;background:#b0b0b0;"></div>
<div class="a" style="left:194px;top:353.1px;width:30px;height:1px;background:#b0b0b0;"></div>
<div class="a" style="left:194px;top:355.9px;width:22px;height:1px;background:#b0b0b0;"></div>
<div class="a" style="left:228px;top:333.5px;width:46px;height:1px;background:#b8b8b8;"></div>
<div class="a" style="left:228px;top:336.5px;width:46px;height:1px;background:#b8b8b8;"></div>
<div class="a" style="left:228px;top:339.5px;width:46px;height:1px;background:#b8b8b8;"></div>
<div class="a" style="left:228px;top:342.5px;width:30px;height:1px;background:#b8b8b8;"></div>
<div class="a" style="left:228px;top:345.5px;width:46px;height:1px;background:#b8b8b8;"></div>
<div class="a" style="left:228px;top:348.5px;width:46px;height:1px;background:#b8b8b8;"></div>
<div class="a" style="left:228px;top:351.5px;width:46px;height:1px;background:#b8b8b8;"></div>
<div class="a" style="left:228px;top:354.5px;width:30px;height:1px;background:#b8b8b8;"></div>
<div class="a" style="left:188px;top:364px;width:93px;height:4px;background:#c45e33;"></div>
<div class="t" style="left:171px;top:380.8px;font-size:10.5px;color:#c4502c;font-weight:normal;transform:scaleX(1.027);">8</div>
<div class="a" style="left:185.5px;top:381px;width:97.5px;height:57px;background:#c9542f;"></div>
<div class="a" style="left:188px;top:384px;width:92.5px;height:51px;background:#fff;"></div>
<div class="a" style="left:211px;top:387.5px;width:50px;height:1.6px;background:#c06040;"></div>
<div class="a" style="left:214px;top:391px;width:43px;height:1.6px;background:#c06040;"></div>
<div class="a" style="left:198px;top:397.5px;width:74px;height:1px;background:#8a8a8a;"></div>
<div class="a" style="left:216.5px;top:396px;width:14.5px;height:11px;background:#e5891f;"></div>
<div class="a" style="left:235px;top:396px;width:14.5px;height:11px;background:#e5891f;"></div>
<div class="a" style="left:203.5px;top:410.5px;width:16px;height:11.5px;background:#e5891f;"></div>
<div class="a" style="left:247px;top:410.5px;width:14.5px;height:11.5px;background:#e5891f;"></div>
<div class="a" style="left:224px;top:413.5px;width:17px;height:16.5px;background:#e5891f;border-radius:50%"></div>
<div class="a" style="left:228px;top:408px;width:3px;height:3px;background:#f4c8b2;"></div>
<div class="a" style="left:236px;top:408px;width:3px;height:3px;background:#f4c8b2;"></div>
<div class="a" style="left:221px;top:417px;width:3px;height:3px;background:#f4c8b2;"></div>
<div class="a" style="left:243px;top:417px;width:3px;height:3px;background:#f4c8b2;"></div>
<div class="a" style="left:188px;top:431px;width:92.5px;height:4px;background:#c65a2d;"></div>
<div class="t" style="left:171px;top:447.8px;font-size:10.5px;color:#666;font-weight:normal;transform:scaleX(1.027);">9</div>
<div class="a" style="left:188px;top:449px;width:93px;height:54px;background:#fff;"></div>
<div class="a" style="left:205px;top:455px;width:59px;height:1.6px;background:#c0603a;"></div>
<div class="a" style="left:216px;top:458.5px;width:36px;height:1.6px;background:#c0603a;"></div>
<div class="a" style="left:198px;top:464.5px;width:74px;height:1px;background:#999;"></div>
<div class="a" style="left:198.5px;top:463px;width:64px;height:8.5px;background:#e5891f;"></div>
<div class="a" style="left:204.5px;top:474.5px;width:63.5px;height:8.5px;background:#e5891f;"></div>
<div class="a" style="left:210px;top:485.5px;width:63.5px;height:8.5px;background:#e5891f;"></div>
<div class="a" style="left:188px;top:498.5px;width:93px;height:4px;background:#c65a2d;"></div>
<div class="t" style="left:166px;top:515.8px;font-size:10.5px;color:#666;font-weight:normal;transform:scaleX(0.941);">10</div>
<div class="a" style="left:188px;top:518px;width:92px;height:51px;background:linear-gradient(90deg,#e3c891,#f0dcae 25%,#e8d09b 50%,#f2dfb0 75%,#e1c68f);"></div>
<div class="a" style="left:191px;top:521px;width:86px;height:45px;background:transparent;border:1px solid #d9bd82"></div>
<div class="a" style="left:193px;top:523px;width:82.5px;height:41px;background:#fefdf9;border:1px solid #b9975a"></div>
<div class="a" style="left:188px;top:540.5px;width:5px;height:6px;background:#3e2c22;"></div>
<div class="a" style="left:275px;top:540.5px;width:5px;height:6px;background:#3e2c22;"></div>
<div class="a" style="left:203px;top:526.0px;width:68px;height:1.3px;background:#7c7c7c;"></div>
<div class="a" style="left:197px;top:529.1px;width:74px;height:1.3px;background:#7c7c7c;"></div>
<div class="a" style="left:197px;top:532.2px;width:74px;height:1.3px;background:#7c7c7c;"></div>
<div class="a" style="left:197px;top:535.3px;width:74px;height:1.3px;background:#7c7c7c;"></div>
<div class="a" style="left:197px;top:538.4px;width:74px;height:1.3px;background:#7c7c7c;"></div>
<div class="a" style="left:197px;top:541.5px;width:74px;height:1.3px;background:#7c7c7c;"></div>
<div class="a" style="left:197px;top:544.6px;width:74px;height:1.3px;background:#7c7c7c;"></div>
<div class="a" style="left:197px;top:547.7px;width:74px;height:1.3px;background:#7c7c7c;"></div>
<div class="a" style="left:197px;top:550.8px;width:74px;height:1.3px;background:#7c7c7c;"></div>
<div class="a" style="left:197px;top:553.9px;width:74px;height:1.3px;background:#7c7c7c;"></div>
<div class="a" style="left:197px;top:557.0px;width:74px;height:1.3px;background:#7c7c7c;"></div>
<div class="a" style="left:197px;top:560.1px;width:30px;height:1.3px;background:#7c7c7c;"></div>
<div class="t" style="left:166px;top:581.8px;font-size:10.5px;color:#666;font-weight:normal;transform:scaleX(1.009);">11</div>
<div class="a" style="left:188px;top:584px;width:93px;height:9px;background:#fff;"></div>
<div class="a" style="left:295px;top:213px;width:10px;height:380px;background:#e2e2e4;"></div>
<div class="a" style="left:295px;top:214px;width:10px;height:10px;background:#fafafa;"></div>
<svg style="left:297px;top:217px" width="6" height="4" viewBox="0 0 6 4"><path d="M0 3.5 L3 0.5 L6 3.5Z" fill="#777"/></svg>
<div class="a" style="left:296px;top:359px;width:8px;height:164px;background:#fdfdfd;"></div>
<div class="a" style="left:295px;top:582px;width:10px;height:10px;background:#fafafa;"></div>
<svg style="left:297px;top:585px" width="6" height="4" viewBox="0 0 6 4"><path d="M0 0.5 L3 3.5 L6 0.5Z" fill="#777"/></svg>
<div class="a" style="left:305px;top:212px;width:3px;height:382px;background:#f1f1f1;"></div>
<div class="a" style="left:387px;top:220px;width:642px;height:362px;background:#fff;"></div>
<div class="t" style="left:546px;top:237.2px;font-size:21.5px;color:#b9553a;font-weight:normal;transform:scaleX(1.016);">Модель <span style="text-decoration:underline wavy #e0403a;text-decoration-thickness:1px;text-underline-offset:1px">формування</span> <span style="text-decoration:underline wavy #e0403a;text-decoration-thickness:1px;text-underline-offset:1px">професійної</span></div>
<div class="t" style="left:554px;top:262.2px;font-size:21.5px;color:#b9553a;font-weight:normal;transform:scaleX(1.011);"><span style="text-decoration:underline wavy #e0403a;text-decoration-thickness:1px;text-underline-offset:1px">компетентності</span> <span style="text-decoration:underline wavy #e0403a;text-decoration-thickness:1px;text-underline-offset:1px">вихователя</span> ЗДО</div>
<div class="a" style="left:449px;top:310.5px;width:526px;height:1.2px;background:#8c8c8c;"></div>
<svg style="left:560px;top:380px" width="240" height="110" viewBox="0 0 240 110"><path d="M81.5 7.5 L101.7 7.5 L111.0 27.9 L117.0 25.7 L110.0 45.4 L89.7 38.3 L93.0 36.7Z" fill="#f0c0aa"/><path d="M191.5 7.5 L171.3 7.5 L162.0 27.9 L156.0 25.7 L163.0 45.4 L183.3 38.3 L180.0 36.7Z" fill="#f0c0aa"/><path d="M42.0 69.7 L63.0 73.5 L64.5 68.3 L75.0 86.7 L56.2 97.8 L56.5 92.6 L42.0 88.5Z" fill="#f0c0aa"/><path d="M232.0 69.7 L211.0 73.5 L209.5 68.3 L199.0 86.7 L217.8 97.8 L217.5 92.6 L232.0 88.5Z" fill="#f0c0aa"/></svg>
<div class="a" style="left:576px;top:299px;width:110px;height:87px;background:#e5861c;border-radius:9px;border:1px solid #f5d5a8"></div>
<div class="a" style="left:708px;top:299px;width:109px;height:87px;background:#e5861c;border-radius:9px;border:1px solid #f5d5a8"></div>
<div class="a" style="left:492px;top:401px;width:110px;height:87px;background:#e5861c;border-radius:9px;border:1px solid #f5d5a8"></div>
<div class="a" style="left:793px;top:401px;width:109px;height:87px;background:#e5861c;border-radius:9px;border:1px solid #f5d5a8"></div>
<div class="a" style="left:640px;top:427px;width:114px;height:114px;background:#e5861c;border-radius:50%;border:1px solid #f5d5a8"></div>
<div class="t" style="left:595px;top:324.5px;font-size:12px;color:#fdf1dc;font-weight:bold;transform:scaleX(1.118);">Методична</div>
<div class="t" style="left:581px;top:348.5px;font-size:12px;color:#fdf1dc;font-weight:bold;transform:scaleX(1.089);"><span style="text-decoration:underline;text-decoration-color:#e8b8a0;text-underline-offset:2px">компетентність</span></div>
<div class="t" style="left:728px;top:328.5px;font-size:12px;color:#fdf1dc;font-weight:bold;transform:scaleX(1.099);">Позитивна</div>
<div class="t" style="left:729px;top:346.0px;font-size:12px;color:#fdf1dc;font-weight:bold;transform:scaleX(1.089);"><span style="text-decoration:underline;text-decoration-color:#e8b8a0;text-underline-offset:2px">мотивація</span></div>
<div class="t" style="left:498px;top:426.5px;font-size:12px;color:#fdf1dc;font-weight:bold;transform:scaleX(1.106);"><span style="text-decoration:underline;text-decoration-color:#e8b8a0;text-underline-offset:2px">Комунікативна</span></div>
<div class="t" style="left:497px;top:450.0px;font-size:12px;color:#fdf1dc;font-weight:bold;transform:scaleX(1.100);"><span style="text-decoration:underline;text-decoration-color:#e8b8a0;text-underline-offset:2px">компетентність</span></div>
<div class="t" style="left:811px;top:438.0px;font-size:12px;color:#fdf1dc;font-weight:bold;transform:scaleX(1.049);"><span style="text-decoration:underline;text-decoration-color:#e8b8a0;text-underline-offset:2px">Самоосвіта</span></div>
<div class="t" style="left:659px;top:463.0px;font-size:12px;color:#fdf1dc;font-weight:normal;transform:scaleX(0.936);">ПРОФЕСІЙНА</div>
<div class="t" style="left:678px;top:478.0px;font-size:12px;color:#fdf1dc;font-weight:normal;transform:scaleX(1.073);">К-СТЬ</div>
<div class="t" style="left:658px;top:493.5px;font-size:12px;color:#fdf1dc;font-weight:normal;transform:scaleX(0.961);">ВИХОВАТЕЛЯ</div>
<div class="a" style="left:387px;top:553px;width:642px;height:29px;background:#c65a2a;"></div>
<div class="a" style="left:387px;top:553px;width:642px;height:2.5px;background:#e98a2a;"></div>
<div class="a" style="left:1105px;top:213px;width:8px;height:378px;background:#e6e6ea;"></div>
<div class="a" style="left:1106px;top:214px;width:7px;height:9px;background:#fafafa;"></div>
<svg style="left:1107px;top:217px" width="5" height="3" viewBox="0 0 5 3"><path d="M0 3 L2.5 0 L5 3Z" fill="#555"/></svg>
<div class="a" style="left:1106px;top:410px;width:7px;height:25px;background:#fdfdfd;"></div>
<div class="a" style="left:1106px;top:541px;width:7px;height:9px;background:#fafafa;"></div>
<svg style="left:1107px;top:544px" width="5" height="3" viewBox="0 0 5 3"><path d="M0 0 L2.5 3 L5 0Z" fill="#555"/></svg>
<svg style="left:1106px;top:554px" width="7" height="7" viewBox="0 0 7 7"><path d="M1 3 L3.5 0.5 L6 3 M1 6.5 L3.5 4 L6 6.5" fill="none" stroke="#555" stroke-width="0.9"/></svg>
<svg style="left:1106px;top:566px" width="7" height="7" viewBox="0 0 7 7"><path d="M1 0.5 L3.5 3 L6 0.5 M1 4 L3.5 6.5 L6 4" fill="none" stroke="#555" stroke-width="0.9"/></svg>
<svg style="left:366px;top:435px" width="9" height="14" viewBox="0 0 9 14"><path d="M0.6 0.6 V11.5 L3 9.2 L5 13 L6.6 12.2 L4.8 8.5 H8Z" fill="#fff" stroke="#222" stroke-width="0.9"/></svg>
<div class="t" style="left:169px;top:595.6px;font-size:8.8px;color:#555;font-weight:normal;transform:scaleX(0.854);">Слайд 8 из 12</div>
<div class="t" style="left:241px;top:596.1px;font-size:8.8px;color:#555;font-weight:normal;transform:scaleX(0.918);">русский</div>
<svg style="left:809px;top:595px" width="10" height="9" viewBox="0 0 10 9"><path d="M0.5 3 H9.5 M0.5 5.5 H9.5 M0.5 8 H9.5 M3 0.5 L5 3 L7 0.5" fill="none" stroke="#555" stroke-width="0.9"/></svg>
<div class="t" style="left:821px;top:595.9px;font-size:8.2px;color:#444;font-weight:normal;transform:scaleX(0.990);">Заметки</div>
<div class="a" style="left:868px;top:594px;width:23px;height:13px;background:#d5d5d5;"></div>
<svg style="left:874px;top:596px" width="11" height="9" viewBox="0 0 11 9"><rect x="0.5" y="0.5" width="10" height="8" fill="none" stroke="#444"/><rect x="2.5" y="2.5" width="4" height="4" fill="#444"/></svg>
<svg style="left:901px;top:595px" width="10" height="10" viewBox="0 0 10 10"><rect x="0.5" y="0.5" width="3.5" height="3.5" fill="none" stroke="#555"/><rect x="6" y="0.5" width="3.5" height="3.5" fill="none" stroke="#555"/><rect x="0.5" y="6" width="3.5" height="3.5" fill="none" stroke="#555"/><rect x="6" y="6" width="3.5" height="3.5" fill="none" stroke="#555"/></svg>
<svg style="left:928px;top:595px" width="11" height="10" viewBox="0 0 11 10"><path d="M0.5 1 Q3 0 5.5 1.5 Q8 0 10.5 1 V9 Q8 8 5.5 9.5 Q3 8 0.5 9Z M5.5 1.5 V9.5" fill="none" stroke="#555"/></svg>
<svg style="left:959px;top:594px" width="9" height="11" viewBox="0 0 9 11"><rect x="0.5" y="0.5" width="8" height="6" fill="none" stroke="#555"/><path d="M4.5 6.5 V10.5 M2 10.5 H7" stroke="#555"/></svg>
<div class="a" style="left:979px;top:600px;width:6px;height:1px;background:#666;"></div>
<div class="a" style="left:990px;top:600px;width:70px;height:1px;background:#d4d4d4;"></div>
<div class="a" style="left:1012px;top:596px;width:4px;height:10px;background:#777;"></div>
<div class="t" style="left:1062px;top:595.0px;font-size:10px;color:#666;font-weight:normal;transform:scaleX(1.027);">+</div>
<div class="t" style="left:1075px;top:595.5px;font-size:9px;color:#555;font-weight:normal;transform:scaleX(0.926);">72 %</div>
<svg style="left:1101px;top:594px" width="12" height="12" viewBox="0 0 12 12"><rect x="2" y="2" width="8" height="8" fill="none" stroke="#666"/><path d="M6 0 L4.5 2 H7.5Z M6 12 L4.5 10 H7.5Z M0 6 L2 4.5 V7.5Z M12 6 L10 4.5 V7.5Z" fill="#666"/></svg>
<div class="a" style="left:167px;top:608px;width:946px;height:1px;background:#7f95b0;"></div>
<svg style="left:170px;top:609px" width="25" height="23" viewBox="0 0 25 23"><defs><radialGradient id="orb" cx="50%" cy="35%" r="60%"><stop offset="0" stop-color="#a9d6f2"/><stop offset="0.5" stop-color="#2a73b8"/><stop offset="1" stop-color="#0c2f5c"/></radialGradient></defs><circle cx="12.5" cy="11.5" r="11" fill="url(#orb)"/><path d="M7 6 Q9 5 12 6 V11 Q9 10 7 11Z" fill="#e65a2a"/><path d="M13 6 Q15 5 18 6 V11 Q15 10 13 11Z" fill="#6ec04a"/><path d="M7 12 Q9 11 12 12 V17 Q9 16 7 17Z" fill="#3a9ee6"/><path d="M13 12 Q15 11 18 12 V17 Q15 16 13 17Z" fill="#f5c42a"/></svg>
<svg style="left:214px;top:610px" width="24" height="22" viewBox="0 0 24 22"><path d="M6 14 Q6 6 13 6 Q19 6 19 12 H8 M8 15 Q9 19 14 19 Q17 19 19 17" fill="none" stroke="#3bb3ea" stroke-width="3.2"/><path d="M3 19 Q0 10 10 4 Q20 -1 22 3 Q23 6 19 9" fill="none" stroke="#e8cf45" stroke-width="1.6"/></svg>
<svg style="left:257px;top:610px" width="22" height="21" viewBox="0 0 22 21"><path d="M2 3 H9 L11 5 H20 V20 H2Z" fill="#e8d67a"/><rect x="4" y="5" width="14" height="7" fill="#fdfbe8" stroke="#b9b07a" stroke-width="0.5"/><path d="M2 10 H20 V20 H2Z" fill="#f0e08a"/><rect x="5" y="15" width="12" height="4" fill="#9ec3d8"/></svg>
<div class="a" style="left:302px;top:611px;width:16px;height:19px;background:linear-gradient(#cfe0f0,#9fbcd8);border-radius:2px;border:1px solid #8aa6c2"></div>
<svg style="left:300px;top:612px" width="20" height="18" viewBox="0 0 20 18"><circle cx="10" cy="9" r="6.5" fill="#f08a2a"/><path d="M8 5.5 L13 9 L8 12.5Z" fill="#fff"/></svg>
<div class="a" style="left:334px;top:609px;width:1px;height:23px;background:#7d90a8;"></div>
<div class="a" style="left:376px;top:609px;width:1px;height:23px;background:#7d90a8;"></div>
<div class="a" style="left:335px;top:609px;width:40px;height:23px;background:linear-gradient(#dfe6ef,#c5d2e0);border:1px solid #8fa3bb;border-radius:2px;opacity:.85"></div>
<div class="a" style="left:465px;top:609px;width:40px;height:23px;background:linear-gradient(#dfe6ef,#c5d2e0);border:1px solid #8fa3bb;border-radius:2px;opacity:.85"></div>
<div class="a" style="left:505px;top:609px;width:45px;height:23px;background:linear-gradient(#dfe6ef,#c5d2e0);border:1px solid #8fa3bb;border-radius:2px;opacity:.85"></div>
<div class="a" style="left:551px;top:609px;width:41px;height:23px;background:linear-gradient(#dfe6ef,#c5d2e0);border:1px solid #8fa3bb;border-radius:2px;opacity:.85"></div>
<div class="a" style="left:595px;top:609px;width:40px;height:23px;background:linear-gradient(#dfe6ef,#c5d2e0);border:1px solid #8fa3bb;border-radius:2px;opacity:.85"></div>
<svg style="left:344px;top:610px" width="22" height="22" viewBox="0 0 22 22"><circle cx="11" cy="11" r="10" fill="#db4437"/><path d="M11 11 L2.3 16 A10 10 0 0 1 3 5Z" fill="#0f9d58"/><path d="M11 11 L19.7 16 A10 10 0 0 1 2.3 16Z" fill="#f4c20d"/><path d="M11 11 L11 1 A10 10 0 0 1 19.7 16Z" fill="#db4437"/><path d="M11 1 A10 10 0 0 0 3 5 L11 11Z" fill="#db4437"/><path d="M3 5 A10 10 0 0 0 2.3 16 L11 11Z" fill="#0f9d58"/><circle cx="11" cy="11" r="4.6" fill="#fff"/><circle cx="11" cy="11" r="3.6" fill="#4285f4"/></svg>
<svg style="left:387px;top:610px" width="22" height="22" viewBox="0 0 22 22"><circle cx="11" cy="11" r="10" fill="#1e88d6"/><path d="M3 13 Q5 3 13 3 Q20 4 20 10 Q20 14 14 14 H7 Q8 19 15 18 Q18 17 19 16 Q16 21 11 21 Q4 20 3 13Z" fill="#4fc15a" opacity=".8"/><circle cx="11" cy="12" r="3.5" fill="#1e88d6"/></svg>
<svg style="left:429px;top:611px" width="24" height="20" viewBox="0 0 24 20"><circle cx="16" cy="4" r="3" fill="#7b83eb"/><rect x="12" y="8" width="10" height="10" rx="3" fill="#7b83eb"/><rect x="3" y="4" width="13" height="13" rx="1.5" fill="#4b53bc"/><path d="M6 7 H13 M9.5 7 V14" stroke="#fff" stroke-width="2"/></svg>
<svg style="left:473px;top:611px" width="22" height="20" viewBox="0 0 22 20"><rect x="6" y="1" width="15" height="18" rx="1.5" fill="#2b7cd3"/><rect x="6" y="7" width="15" height="6" fill="#185abd"/><rect x="6" y="13" width="15" height="6" fill="#103f91"/><rect x="1" y="4" width="12" height="12" rx="1" fill="#185abd"/><path d="M3 7 L4.5 13 L7 8 L9.5 13 L11 7" fill="none" stroke="#fff" stroke-width="1.3"/></svg>
<svg style="left:517px;top:610px" width="22" height="22" viewBox="0 0 22 22"><circle cx="11" cy="11" r="10" fill="#fff"/><path d="M6 5 L11 12 L16 5 M11 12 V18" fill="none" stroke="#e52a2a" stroke-width="2.6"/></svg>
<svg style="left:560px;top:610px" width="22" height="22" viewBox="0 0 22 22"><circle cx="11" cy="11" r="10.5" fill="#4a8cf0"/><rect x="5" y="7.5" width="8" height="7" rx="1.5" fill="#fff"/><path d="M13.5 10 L17 8 V14 L13.5 12Z" fill="#fff"/></svg>
<svg style="left:603px;top:610px" width="22" height="22" viewBox="0 0 22 22"><circle cx="12" cy="11" r="10" fill="#ed6c47"/><path d="M12 1 A10 10 0 0 1 22 11 H12Z" fill="#ff8f6b"/><path d="M12 11 H22 A10 10 0 0 1 12 21Z" fill="#d35230"/><rect x="1" y="5" width="12" height="12" rx="1" fill="#c43e1c"/><path d="M4.5 14.5 V7.5 H8 Q10 7.5 10 9.5 Q10 11.5 8 11.5 H4.5" fill="none" stroke="#fff" stroke-width="1.6"/></svg>
<div class="t" style="left:899px;top:615.5px;font-size:9px;color:#e6ecf4;font-weight:normal;transform:scaleX(0.923);">RU</div>
<svg style="left:921px;top:614px" width="14" height="12" viewBox="0 0 14 12"><circle cx="7" cy="6" r="6" fill="#3a7fe0"/><rect x="3.5" y="5" width="7" height="2.5" fill="#fff"/></svg>
<svg style="left:938px;top:613px" width="14" height="14" viewBox="0 0 14 14"><circle cx="7" cy="7" r="6.5" fill="#fff"/><path d="M4 3.5 L7 7.5 L10 3.5 M7 7.5 V11" fill="none" stroke="#d32" stroke-width="2"/></svg>
<svg style="left:953px;top:613px" width="14" height="14" viewBox="0 0 14 14"><circle cx="7" cy="7" r="6" fill="#b6a0e8" stroke="#8a60d0"/><circle cx="11" cy="3" r="2.5" fill="#e02a3a"/></svg>
<svg style="left:968px;top:613px" width="14" height="14" viewBox="0 0 14 14"><path d="M2 10 L8 3 L13 6 L7 13Z" fill="#8d5a4a"/><path d="M3 9 L9 4" stroke="#f0c0a0"/></svg>
<svg style="left:985px;top:613px" width="13" height="14" viewBox="0 0 13 14"><rect x="0.5" y="0.5" width="12" height="13" fill="#2b9ee0"/><rect x="3" y="3" width="7" height="8" fill="none" stroke="#fff"/></svg>
<svg style="left:1003px;top:613px" width="12" height="14" viewBox="0 0 12 14"><rect x="1" y="1" width="9" height="12" fill="#f6f6f6" stroke="#555"/><path d="M3 3 V7 M6 3 V7" stroke="#555"/></svg>
<svg style="left:1018px;top:614px" width="14" height="11" viewBox="0 0 14 11"><path d="M1 10 H3 V8 H1Z M4 10 H6 V6 H4Z M7 10 H9 V4 H7Z M10 10 H12 V2 H10Z" fill="#e8eef6"/></svg>
<svg style="left:1036px;top:613px" width="13" height="13" viewBox="0 0 13 13"><path d="M1 4.5 H4 L8 1 V12 L4 8.5 H1Z" fill="#f3f6fa"/><path d="M10 4 Q12 6.5 10 9" fill="none" stroke="#e6edf5"/></svg>
<div class="t" style="left:1071px;top:611.5px;font-size:9px;color:#f0f4f8;font-weight:normal;transform:scaleX(0.888);">15:59</div>
<div class="t" style="left:1061px;top:623.5px;font-size:9px;color:#f0f4f8;font-weight:normal;transform:scaleX(0.866);">06.06.2022</div>
<div class="a" style="left:1106px;top:609px;width:7px;height:23px;background:linear-gradient(90deg,#8da2bb,#7c92ad);border-left:1px solid #6f86a3"></div>
<svg style="left:29px;top:640px" width="20" height="22" viewBox="0 0 20 22"><rect x="5.5" y="1" width="8" height="12" rx="4" fill="#c8c8c8"/><path d="M3 9 Q3 15 9.5 15 Q16 15 16 9 M9.5 15 V19 M6 19.5 H13" fill="none" stroke="#c8c8c8" stroke-width="1.5"/><path d="M1 21 L19 3" stroke="#e0364a" stroke-width="1.4"/></svg>
<svg style="left:61px;top:650px" width="7" height="4" viewBox="0 0 7 4"><path d="M0.5 3.5 L3.5 0.5 L6.5 3.5" fill="none" stroke="#ccc" stroke-width="1.1"/></svg>
<div class="t" style="left:20px;top:664.8px;font-size:10.5px;color:#d6d6d6;font-weight:normal;transform:scaleX(1.006);">Unmute</div>
<svg style="left:105px;top:644px" width="22" height="14" viewBox="0 0 22 14"><rect x="0.5" y="0.5" width="14" height="13" rx="3" fill="#cbcbcb"/><path d="M15 4.5 L21 1 V13 L15 9.5Z" fill="#cbcbcb"/></svg>
<svg style="left:143px;top:650px" width="7" height="4" viewBox="0 0 7 4"><path d="M0.5 3.5 L3.5 0.5 L6.5 3.5" fill="none" stroke="#ccc" stroke-width="1.1"/></svg>
<div class="t" style="left:91px;top:664.8px;font-size:10.5px;color:#d6d6d6;font-weight:normal;">Stop Video</div>
<svg style="left:491px;top:643px" width="21" height="15" viewBox="0 0 21 15"><circle cx="7" cy="4" r="3.6" fill="#cbcbcb"/><path d="M0.5 14.5 Q0.5 8.5 7 8.5 Q13.5 8.5 13.5 14.5Z" fill="#cbcbcb"/><circle cx="15" cy="5" r="3" fill="#cbcbcb"/><path d="M14.5 14.5 Q14.5 10 13 9.5 Q14 9 15.5 9 Q20.5 9 20.5 14.5Z" fill="#cbcbcb"/></svg>
<div class="t" style="left:516px;top:644.8px;font-size:10.5px;color:#d6d6d6;font-weight:normal;transform:scaleX(1.027);">27</div>
<svg style="left:542px;top:650px" width="7" height="4" viewBox="0 0 7 4"><path d="M0.5 3.5 L3.5 0.5 L6.5 3.5" fill="none" stroke="#ccc" stroke-width="1.1"/></svg>
<div class="t" style="left:476px;top:664.8px;font-size:10.5px;color:#d6d6d6;font-weight:normal;transform:scaleX(0.984);">Participants</div>
<svg style="left:581px;top:643px" width="18" height="16" viewBox="0 0 18 16"><path d="M3 0.5 H15 Q17.5 0.5 17.5 3 V9 Q17.5 11.5 15 11.5 H8 L4.5 15.5 V11.5 H3 Q0.5 11.5 0.5 9 V3 Q0.5 0.5 3 0.5Z" fill="#c8c8c8"/></svg>
<div class="t" style="left:579px;top:664.8px;font-size:10.5px;color:#d6d6d6;font-weight:normal;transform:scaleX(0.946);">Chat</div>
<svg style="left:653px;top:642px" width="22" height="17" viewBox="0 0 22 17"><rect x="0.5" y="0.5" width="20.5" height="15.5" rx="3" fill="#23d45f"/><path d="M10.75 4 L7 8 H9.5 V12 H12 V8 H14.5Z" fill="#0d3a1a"/></svg>
<div class="t" style="left:634px;top:664.8px;font-size:10.5px;color:#3fc05f;font-weight:normal;transform:scaleX(0.934);">Share Screen</div>
<svg style="left:727px;top:640px" width="22" height="22" viewBox="0 0 22 22"><circle cx="11" cy="11" r="9.5" fill="none" stroke="#cbcbcb" stroke-width="1.8"/><circle cx="11" cy="11" r="7" fill="#bfbfbf"/></svg>
<div class="t" style="left:722px;top:664.8px;font-size:10.5px;color:#d6d6d6;font-weight:normal;transform:scaleX(0.975);">Record</div>
<svg style="left:796px;top:640px" width="22" height="21" viewBox="0 0 22 21"><circle cx="9.5" cy="12" r="8.5" fill="#c8c8c8"/><circle cx="6.8" cy="10.5" r="1.2" fill="#1a1a1a"/><circle cx="12.2" cy="10.5" r="1.2" fill="#1a1a1a"/><path d="M5.5 13.5 Q9.5 17.5 13.5 13.5" fill="none" stroke="#1a1a1a" stroke-width="1.3"/><path d="M17 0.5 V6.5 M14 3.5 H20" stroke="#c8c8c8" stroke-width="1.6"/></svg>
<div class="t" style="left:783px;top:664.8px;font-size:10.5px;color:#d6d6d6;font-weight:normal;transform:scaleX(0.942);">Reactions</div>
<svg style="left:863px;top:642px" width="18" height="18" viewBox="0 0 18 18"><path d="M1 6 V3 Q1 1 3 1 H6 M1 14 V17 Q1 19 3 19 H6 M19 14 V17 Q19 19 17 19 H14" fill="none" stroke="#c8c8c8" stroke-width="1.6"/><circle cx="15" cy="5" r="3.3" fill="none" stroke="#c8c8c8" stroke-width="1.6"/><circle cx="5" cy="15" r="1.5" fill="#c8c8c8"/><circle cx="5" cy="5" r="0.1" fill="#c8c8c8"/></svg>
<div class="t" style="left:860px;top:664.8px;font-size:10.5px;color:#d6d6d6;font-weight:normal;transform:scaleX(0.961);">Apps</div>
<div class="a" style="left:1219px;top:647px;width:51px;height:22px;background:#c52a2a;border-radius:5px"></div>
<div class="t" style="left:1231px;top:652.8px;font-size:10.5px;color:#fff;font-weight:bold;transform:scaleX(0.873);">Leave</div>
<svg style="left:15px;top:690px" width="21" height="20" viewBox="0 0 21 20"><rect x="0.5" y="0.5" width="20" height="19" rx="1.5" fill="#1663b8"/><rect x="2.5" y="2.5" width="7" height="15" fill="#fafafa"/><rect x="11" y="2.5" width="7.5" height="15" fill="#55b6f0"/><rect x="11" y="11" width="7.5" height="6.5" fill="#1a8be0"/></svg>
<svg style="left:412px;top:690px" width="19" height="19" viewBox="0 0 19 19"><rect x="0" y="0" width="9" height="9" fill="#2590e8"/><rect x="10" y="0" width="9" height="9" fill="#3aa6f2"/><rect x="0" y="10" width="9" height="9" fill="#1e7fd8"/><rect x="10" y="10" width="9" height="9" fill="#2b95ea"/></svg>
<svg style="left:446px;top:689px" width="20" height="21" viewBox="0 0 20 21"><circle cx="11.5" cy="8.5" r="6.8" fill="none" stroke="#111" stroke-width="2.4"/><path d="M6.5 13.5 L1.5 19" stroke="#111" stroke-width="2.8" stroke-linecap="round"/></svg>
<svg style="left:481px;top:690px" width="20" height="19" viewBox="0 0 20 19"><rect x="5" y="1" width="14" height="13" fill="#d8d8d8"/><rect x="1" y="5" width="14" height="13" fill="#1a1a1a"/><rect x="3" y="7" width="10" height="9" fill="#5a5a5a"/></svg>
<svg style="left:519px;top:690px" width="21" height="20" viewBox="0 0 21 20"><path d="M10.5 1 Q19.5 1 19.5 9.5 Q19.5 18 10.5 18 Q8 18 5.5 17 L1.5 19 L2.5 15 Q1.5 13 1.5 9.5 Q1.5 1 10.5 1Z" fill="#7b6ce0"/><rect x="6" y="6.5" width="7" height="6" rx="1" fill="#fff"/><path d="M13.5 8.5 L16 7 V12 L13.5 10.5Z" fill="#fff"/></svg>
<svg style="left:556px;top:689px" width="21" height="21" viewBox="0 0 21 21"><path d="M6 5 Q6 1 10.5 1 Q15 1 15 5" fill="none" stroke="#1c4a8a" stroke-width="1.6"/><rect x="1" y="5" width="19" height="15" rx="2" fill="#1a5fb4"/><rect x="5" y="8.5" width="5" height="4" fill="#f35325"/><rect x="11" y="8.5" width="5" height="4" fill="#81bc06"/><rect x="5" y="13.5" width="5" height="4" fill="#05a6f0"/><rect x="11" y="13.5" width="5" height="4" fill="#ffba08"/></svg>
<svg style="left:592px;top:690px" width="22" height="19" viewBox="0 0 22 19"><rect x="0.5" y="5" width="21" height="14" fill="#1f8ee8"/><path d="M0.5 5 L11 13 L21.5 5 L11 0Z" fill="#58c0f5"/><path d="M0.5 19 L11 11 L21.5 19Z" fill="#0e6cc4"/></svg>
<svg style="left:630px;top:689px" width="20" height="20" viewBox="0 0 20 20"><circle cx="10" cy="10" r="10" fill="#db4437"/><path d="M10 10 L1.3399999999999999 15.0 A10 10 0 0 1 1.3399999999999999 5.0 Z" fill="#0f9d58"/><path d="M10 10 L1.3399999999999999 15.0 A10 10 0 0 0 18.66 15.0 Z" fill="#f4c20d"/><path d="M10 10 L1.3399999999999999 5.0 A10 10 0 0 0 1.3399999999999999 15.0 Z" fill="#0f9d58"/><circle cx="10" cy="10" r="4.6000000000000005" fill="#fff"/><circle cx="10" cy="10" r="3.5999999999999996" fill="#4285f4"/></svg>
<svg style="left:641px;top:684px" width="12" height="12" viewBox="0 0 12 12"><circle cx="6" cy="6" r="5.5" fill="#f5e8e0" stroke="#fff"/><path d="M2 6 Q2 1.5 6 1.5 Q10 1.5 10 6 L10 11 H2Z" fill="#3a2a28"/><ellipse cx="6" cy="6.5" rx="2.5" ry="3" fill="#e6c0a8"/></svg>
<div class="a" style="left:635px;top:716px;width:6px;height:2px;background:#8aa08a;border-radius:1px"></div>
<svg style="left:667px;top:690px" width="21" height="19" viewBox="0 0 21 19"><path d="M0.5 2 H8 L10 4 H20.5 V18 H0.5Z" fill="#f0b723"/><rect x="0.5" y="6.5" width="20" height="11.5" fill="#ffd35a"/><rect x="0.5" y="15" width="20" height="3" fill="#2a7fd6"/></svg>
<div class="a" style="left:672px;top:716px;width:6px;height:2px;background:#8aa08a;border-radius:1px"></div>
<svg style="left:703px;top:689px" width="21" height="21" viewBox="0 0 21 21"><circle cx="10.5" cy="10.5" r="10" fill="#1e88d6"/><path d="M1 12 Q3 2 11 2 Q19 3 20 9 Q20 13.5 14.5 13.5 H6.5 Q7.5 18.5 13.5 18.5 Q17 18 19 16 Q16 21 10.5 21 Q3 20 1 12Z" fill="#49c25e"/><path d="M6.5 13.5 Q6 7 12 7 Q16 7 16 11 Q16 13.5 14.5 13.5Z" fill="#1a6ac4"/></svg>
<div class="a" style="left:708px;top:716px;width:6px;height:2px;background:#8aa08a;border-radius:1px"></div>
<svg style="left:741px;top:689px" width="18" height="21" viewBox="0 0 18 21"><path d="M1 1 H12 L17 6 V20 H1Z" fill="#fafafa" stroke="#2a6dbf" stroke-width="1.2"/><path d="M4 8 H14 M4 11 H14 M4 14 H14 M4 17 H10" stroke="#2a6dbf" stroke-width="1.2"/><path d="M12 1 V6 H17" fill="#d6e6f8" stroke="#2a6dbf"/></svg>
<div class="a" style="left:745px;top:716px;width:6px;height:2px;background:#8aa08a;border-radius:1px"></div>
<svg style="left:776px;top:690px" width="22" height="19" viewBox="0 0 22 19"><rect x="0.5" y="0.5" width="21" height="18" fill="#1e9a52"/><rect x="3" y="3" width="5" height="13" fill="#f2d23a"/><rect x="9" y="3" width="5" height="13" fill="#2a8ad8"/><rect x="15" y="3" width="5" height="13" fill="#fff"/><path d="M3 7 H20 M3 11 H20" stroke="#1e9a52"/></svg>
<div class="a" style="left:782px;top:716px;width:6px;height:2px;background:#8aa08a;border-radius:1px"></div>
<svg style="left:813px;top:690px" width="20" height="20" viewBox="0 0 20 20"><circle cx="10" cy="10" r="10" fill="#db4437"/><path d="M10 10 L1.3399999999999999 15.0 A10 10 0 0 1 1.3399999999999999 5.0 Z" fill="#0f9d58"/><path d="M10 10 L1.3399999999999999 15.0 A10 10 0 0 0 18.66 15.0 Z" fill="#f4c20d"/><path d="M10 10 L1.3399999999999999 5.0 A10 10 0 0 0 1.3399999999999999 15.0 Z" fill="#0f9d58"/><circle cx="10" cy="10" r="4.6000000000000005" fill="#fff"/><circle cx="10" cy="10" r="3.5999999999999996" fill="#4285f4"/></svg>
<svg style="left:824px;top:685px" width="12" height="12" viewBox="0 0 12 12"><circle cx="6" cy="6" r="5.5" fill="#3aa04a" stroke="#dfe" /><circle cx="6" cy="4.5" r="2" fill="#fff"/><path d="M2.5 10 Q6 6 9.5 10Z" fill="#fff"/></svg>
<div class="a" style="left:819px;top:716px;width:6px;height:2px;background:#8aa08a;border-radius:1px"></div>
<div class="a" style="left:841px;top:682px;width:38px;height:36px;background:rgba(255,255,255,0.45);border-radius:4px"></div>
<svg style="left:850px;top:690px" width="21" height="21" viewBox="0 0 21 21"><rect x="0" y="0" width="21" height="21" rx="5" fill="#2d8cff"/><rect x="4" y="7" width="8.5" height="7" rx="1.4" fill="#fff"/><path d="M13 9.5 L17 7.2 V13.8 L13 11.5Z" fill="#fff"/></svg>
<div class="a" style="left:852px;top:715px;width:16px;height:2.5px;background:#2270d0;border-radius:1.5px"></div>
<svg style="left:1043px;top:695px" width="13" height="8" viewBox="0 0 13 8"><path d="M0.8 7 L6.5 1 L12.2 7" fill="none" stroke="#222" stroke-width="1.3"/></svg>
<svg style="left:1068px;top:690px" width="11" height="19" viewBox="0 0 11 19"><rect x="2.5" y="0.7" width="6" height="11" rx="3" fill="none" stroke="#1a6ac4" stroke-width="1.4"/><path d="M0.7 8 Q0.7 14 5.5 14 Q10.3 14 10.3 8 M5.5 14 V18" fill="none" stroke="#1a6ac4" stroke-width="1.4"/></svg>
<div class="t" style="left:1096px;top:695.0px;font-size:10px;color:#222;font-weight:normal;transform:scaleX(1.007);">УКР</div>
<svg style="left:1129px;top:694px" width="15" height="12" viewBox="0 0 15 12"><path d="M1 4.5 Q7.5 -1.5 14 4.5 M3.2 7 Q7.5 2.5 11.8 7 M5.3 9.3 Q7.5 7.2 9.7 9.3" fill="none" stroke="#222" stroke-width="1.3"/><circle cx="7.5" cy="11" r="1" fill="#222"/></svg>
<svg style="left:1148px;top:693px" width="17" height="14" viewBox="0 0 17 14"><path d="M1 4.8 H3.8 L7.5 1.3 V12.7 L3.8 9.2 H1Z" fill="none" stroke="#222" stroke-width="1.2"/><path d="M10 4.5 Q11.5 7 10 9.5 M12.2 2.8 Q15 7 12.2 11.2" fill="none" stroke="#222" stroke-width="1.2"/></svg>
<svg style="left:1168px;top:694px" width="18" height="12" viewBox="0 0 18 12"><rect x="3" y="2.5" width="12" height="8" rx="1" fill="none" stroke="#222" stroke-width="1.2"/><rect x="5" y="4.5" width="8" height="4" fill="#222"/><rect x="15.5" y="5" width="1.5" height="3" fill="#222"/><path d="M2 0.5 L0.5 4 H2.5 L1.5 7" fill="none" stroke="#222"/></svg>
<div class="t" style="left:1222px;top:687.9px;font-size:10.3px;color:#1a1a1a;font-weight:normal;transform:scaleX(0.892);">15:58</div>
<div class="t" style="left:1196px;top:702.4px;font-size:10.3px;color:#1a1a1a;font-weight:normal;transform:scaleX(0.951);">06.06.2022</div>
<svg style="left:1250px;top:693px" width="14" height="14" viewBox="0 0 14 14"><circle cx="7" cy="7" r="6.8" fill="#1768d0"/><text x="7" y="10.5" font-size="9" fill="#fff" text-anchor="middle" font-family="Liberation Sans" font-weight="bold">1</text></svg>
<div class="a" style="left:900px;top:590px;width:213px;height:18px;overflow:hidden"><div class="a" style="left:-900px;top:-590px;width:1280px;height:720px">
<div class="t" style="left:947px;top:597.5px;font-size:15px;color:rgba(140,140,140,0.6);font-weight:normal;transform:scaleX(1.096);">Активація Windows</div>
</div></div>
<div class="t" style="left:1117px;top:619.8px;font-size:11.5px;color:#8e8e8e;font-weight:normal;transform:scaleX(1.037);">ки", щоб активувати</div>
<div class="t" style="left:945.5px;top:635.5px;font-size:12px;color:#8e8e8e;font-weight:normal;">Windows.</div></body></html>
